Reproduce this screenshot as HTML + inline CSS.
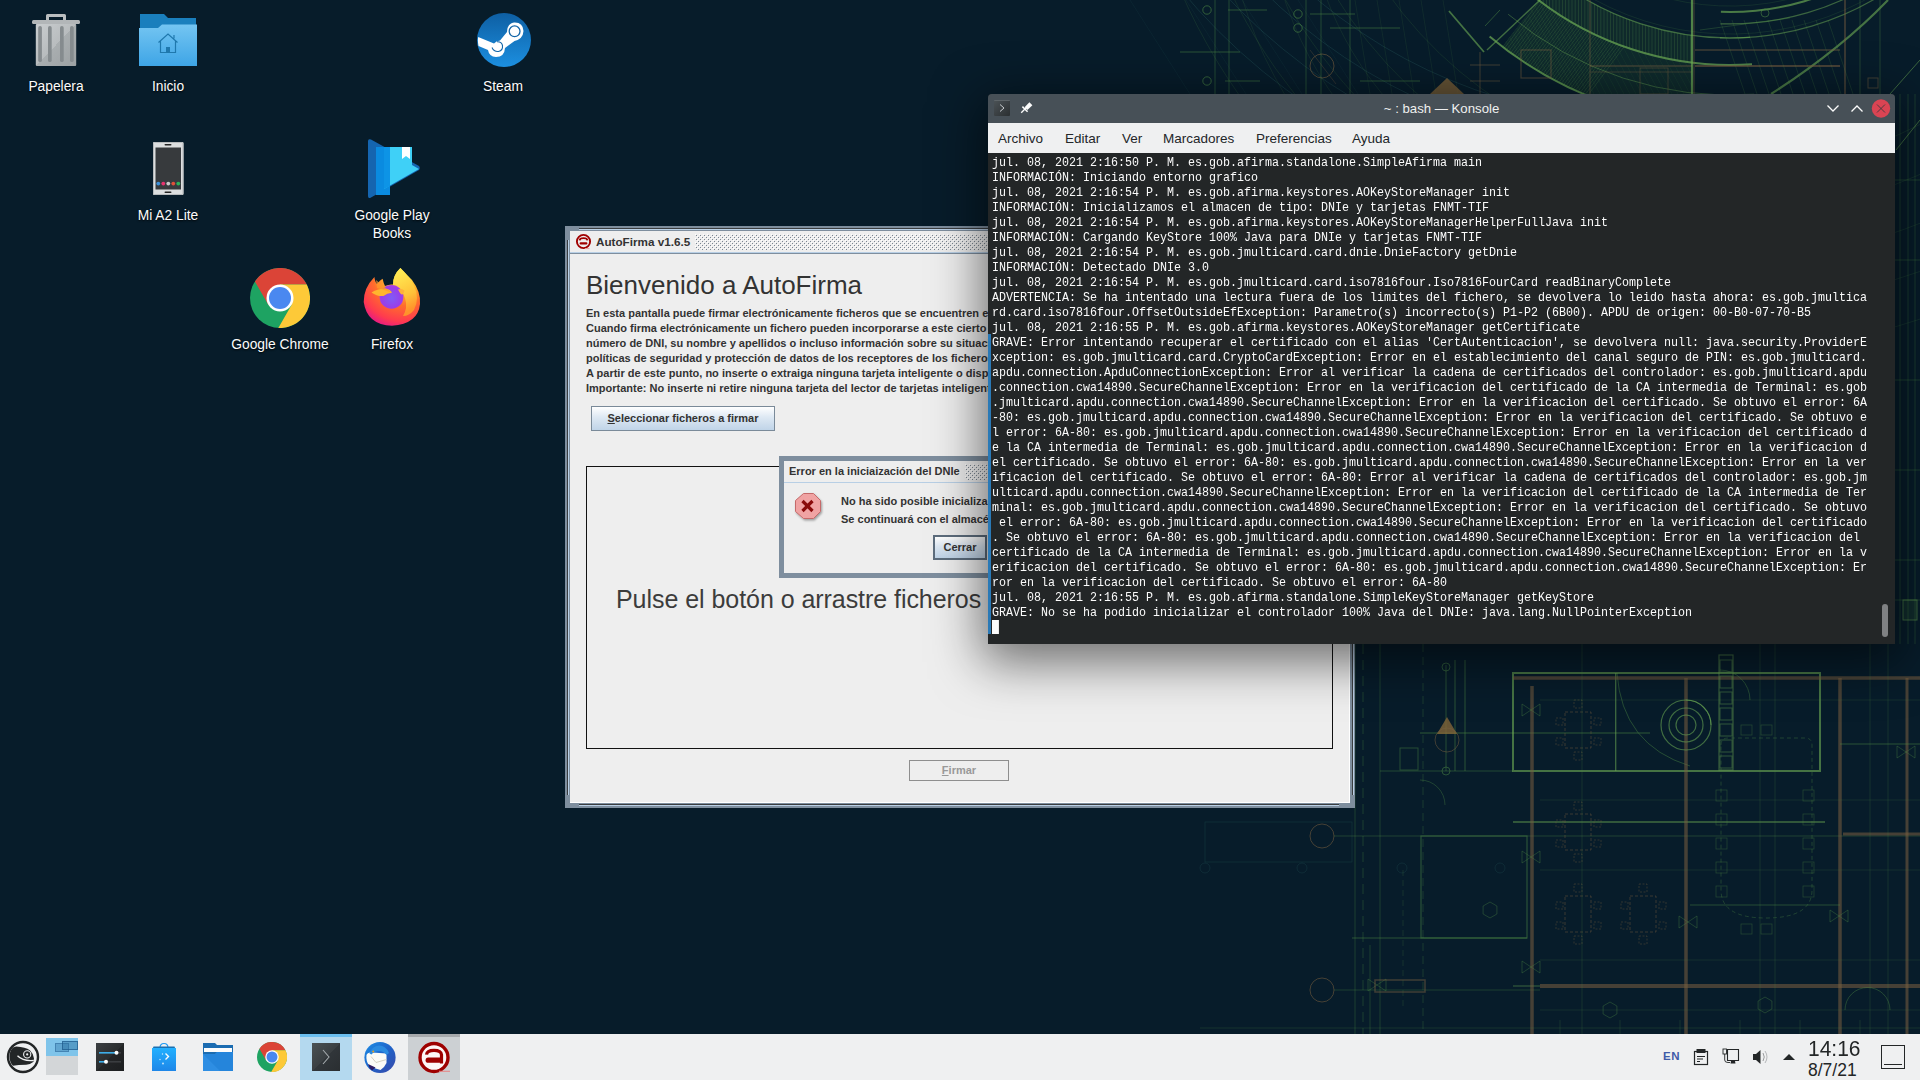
<!DOCTYPE html>
<html><head><meta charset="utf-8">
<style>
*{margin:0;padding:0;box-sizing:border-box}
html,body{width:1920px;height:1080px;overflow:hidden}
body{background:#071c2a;font-family:"Liberation Sans",sans-serif;position:relative}
.abs{position:absolute}
.lbl{position:absolute;color:#fcfcfc;font-size:13.8px;line-height:18px;text-align:center;text-shadow:0 1px 2px rgba(0,0,0,.9)}
#wall{position:absolute;left:0;top:0;width:1920px;height:1034px;filter:blur(0.3px)}
/* AutoFirma */
#af{position:absolute;left:565px;top:226px;width:790px;height:582px;background:#7e8e9e}
#af .tb{position:absolute;left:5px;top:5px;width:780px;height:22px;background:#eeeeee}
#af .cont{position:absolute;left:5px;top:28px;width:779px;height:548px;background:#eeeeee}
.bold{font-weight:bold}
/* Konsole */
#kon{position:absolute;left:988px;top:94px;width:907px;height:550px;background:#232627;border-radius:4px 4px 0 0;box-shadow:0 12px 50px 6px rgba(0,0,0,.55)}
#kon .title{position:absolute;left:0;top:0;width:907px;height:29px;background:#475057;border-radius:4px 4px 0 0}
#kon .menu{position:absolute;left:0;top:29px;width:907px;height:30px;background:#eff0f1}
#kon .term{position:absolute;left:4px;top:61px;transform-origin:0 0;transform:scaleX(0.86405);font-family:"Liberation Mono",monospace;font-size:13.5px;line-height:15px;color:#fcfcfc;white-space:pre}
#kon .cur{display:inline-block;width:8.1px;height:14px;background:#fcfcfc;vertical-align:top}
#kon .mi{position:absolute;top:1px;line-height:30px;font-size:13.5px;color:#232629}
#dlg{position:absolute;left:779px;top:456px;width:300px;height:122px;background:#7e8e9e}
.dots{background-image:radial-gradient(circle,#b5b5b5 0.6px,transparent 0.9px);background-size:4px 4px}
.para{font-size:11px;line-height:15px;color:#333;white-space:nowrap}
.btn{font-size:11px;font-weight:bold;color:#333;text-align:center;line-height:22px;border:1px solid #7a8a99;background:linear-gradient(#ffffff,#dde8f3 45%,#c0d4e8)}
.btnd{font-size:11px;font-weight:bold;color:#999;text-align:center;line-height:19px;border:1px solid #8e8e8e;background:#eeeeee}
/* taskbar */
#tbar{position:absolute;left:0;top:1034px;width:1920px;height:46px;background:#eff0f1}
</style></head>
<body>
<div id="wall"><svg width="1920" height="1034" viewBox="0 0 1920 1034"><path d="M1130,-400 A520,520 0 0 0 1650,120" stroke="#2f6a68" stroke-width="0.8" fill="none" opacity="0.35"/><path d="M1100,-400 A550,550 0 0 0 1650,150" stroke="#2f6a68" stroke-width="0.8" fill="none" opacity="0.35"/><path d="M1070,-400 A580,580 0 0 0 1650,180" stroke="#2f6a68" stroke-width="0.8" fill="none" opacity="0.35"/><path d="M1040,-400 A610,610 0 0 0 1650,210" stroke="#2f6a68" stroke-width="0.8" fill="none" opacity="0.35"/><line x1="1130.0" y1="0.0" x2="1190.0" y2="94.0" stroke="#2f6a68" stroke-width="0.6" opacity="0.18"/><line x1="1186.0" y1="0.0" x2="1246.0" y2="94.0" stroke="#2f6a68" stroke-width="0.6" opacity="0.18"/><line x1="1242.0" y1="0.0" x2="1302.0" y2="94.0" stroke="#2f6a68" stroke-width="0.6" opacity="0.18"/><line x1="1298.0" y1="0.0" x2="1358.0" y2="94.0" stroke="#2f6a68" stroke-width="0.6" opacity="0.18"/><circle cx="1207.0" cy="10.0" r="4.2" stroke="#4e8a45" stroke-width="1" fill="none" opacity="0.6"/><circle cx="1207.0" cy="81.0" r="4.2" stroke="#4e8a45" stroke-width="1" fill="none" opacity="0.6"/><circle cx="1298.0" cy="14.0" r="4.2" stroke="#4e8a45" stroke-width="1" fill="none" opacity="0.6"/><circle cx="1298.0" cy="28.0" r="4.2" stroke="#4e8a45" stroke-width="1" fill="none" opacity="0.6"/><line x1="1215.0" y1="0.0" x2="1215.0" y2="94.0" stroke="#4e8a45" stroke-width="0.9" opacity="0.45"/><line x1="1229.0" y1="0.0" x2="1229.0" y2="94.0" stroke="#4e8a45" stroke-width="0.9" opacity="0.45"/><line x1="1306.0" y1="0.0" x2="1306.0" y2="94.0" stroke="#4e8a45" stroke-width="0.9" opacity="0.45"/><line x1="1321.0" y1="0.0" x2="1321.0" y2="94.0" stroke="#4e8a45" stroke-width="0.9" opacity="0.45"/><line x1="1350.0" y1="0.0" x2="1350.0" y2="94.0" stroke="#4e8a45" stroke-width="0.9" opacity="0.45"/><line x1="1228.0" y1="10.0" x2="1267.0" y2="10.0" stroke="#4e8a45" stroke-width="1" opacity="0.5"/><line x1="1310.0" y1="14.0" x2="1355.0" y2="14.0" stroke="#4e8a45" stroke-width="1" opacity="0.5"/><line x1="1330.0" y1="28.0" x2="1400.0" y2="28.0" stroke="#4e8a45" stroke-width="1" opacity="0.5"/><line x1="1225.0" y1="81.0" x2="1260.0" y2="81.0" stroke="#4e8a45" stroke-width="1" opacity="0.5"/><line x1="1360.0" y1="81.0" x2="1420.0" y2="81.0" stroke="#4e8a45" stroke-width="1" opacity="0.5"/><line x1="1180.0" y1="52.0" x2="1240.0" y2="52.0" stroke="#4e8a45" stroke-width="1" opacity="0.5"/><circle cx="1322.0" cy="66.0" r="12.0" stroke="#7a6040" stroke-width="1" fill="none" opacity="0.6"/><line x1="1310.0" y1="50.0" x2="1336.0" y2="84.0" stroke="#7a6040" stroke-width="0.8" opacity="0.4"/><path d="M1305,-120 A335,335 0 0 0 1640,215" stroke="#4e8a45" stroke-width="0.7" fill="none" opacity="0.22"/><path d="M1265,-120 A375,375 0 0 0 1640,255" stroke="#4e8a45" stroke-width="0.7" fill="none" opacity="0.22"/><path d="M1225,-120 A415,415 0 0 0 1640,295" stroke="#4e8a45" stroke-width="0.7" fill="none" opacity="0.22"/><line x1="1355.0" y1="0.0" x2="1370.0" y2="94.0" stroke="#4e8a45" stroke-width="0.6" opacity="0.22"/><line x1="1377.0" y1="0.0" x2="1392.0" y2="94.0" stroke="#4e8a45" stroke-width="0.6" opacity="0.22"/><line x1="1399.0" y1="0.0" x2="1414.0" y2="94.0" stroke="#4e8a45" stroke-width="0.6" opacity="0.22"/><line x1="1421.0" y1="0.0" x2="1436.0" y2="94.0" stroke="#4e8a45" stroke-width="0.6" opacity="0.22"/><line x1="1443.0" y1="0.0" x2="1458.0" y2="94.0" stroke="#4e8a45" stroke-width="0.6" opacity="0.22"/><defs><clipPath id="rc"><rect x="1300" y="0" width="392" height="94"/></clipPath><clipPath id="bandA"><polygon points="1756.1,123.1 1749.3,123.5 1742.6,123.8 1735.8,124.0 1729.0,124.0 1722.2,123.9 1715.5,123.7 1708.7,123.4 1702.0,122.9 1695.2,122.4 1688.5,121.7 1681.7,120.9 1675.0,119.9 1668.4,118.9 1661.7,117.7 1655.0,116.4 1648.4,115.0 1641.8,113.5 1635.3,111.8 1628.7,110.0 1622.2,108.1 1615.7,106.1 1609.3,104.0 1602.9,101.8 1596.6,99.4 1590.3,96.9 1584.0,94.3 1577.8,91.6 1571.6,88.8 1565.5,85.9 1559.5,82.9 1553.5,79.7 1547.5,76.5 1541.7,73.1 1535.8,69.7 1530.1,66.1 1524.4,62.4 1518.8,58.6 1513.2,54.8 1507.7,50.8 1502.3,46.7 1538.2,-0.1 1542.8,3.3 1547.4,6.7 1552.1,9.9 1556.8,13.1 1561.6,16.2 1566.5,19.2 1571.4,22.1 1576.3,25.0 1581.3,27.7 1586.4,30.4 1591.5,32.9 1596.6,35.4 1601.8,37.7 1607.0,40.0 1612.3,42.2 1617.6,44.3 1623.0,46.3 1628.4,48.2 1633.8,49.9 1639.2,51.6 1644.7,53.2 1650.2,54.7 1655.7,56.1 1661.3,57.4 1666.9,58.6 1672.5,59.7 1678.1,60.7 1683.7,61.6 1689.4,62.4 1695.0,63.1 1700.7,63.6 1706.4,64.1 1712.1,64.5 1717.8,64.8 1723.5,64.9 1729.2,65.0 1734.9,65.0 1740.6,64.8 1746.3,64.6 1752.0,64.2"/></clipPath><clipPath id="bandB"><polygon points="1752.0,64.2 1744.6,64.7 1737.1,64.9 1729.7,65.0 1722.3,64.9 1714.9,64.6 1707.5,64.2 1700.1,63.6 1692.7,62.8 1685.3,61.8 1678.0,60.7 1670.7,59.4 1663.4,57.9 1656.2,56.2 1649.0,54.4 1641.9,52.4 1634.8,50.3 1627.7,47.9 1620.7,45.4 1613.8,42.8 1606.9,40.0 1600.1,37.0 1593.4,33.8 1586.7,30.5 1580.2,27.1 1573.7,23.5 1567.3,19.7 1561.0,15.8 1554.8,11.8 1548.6,7.6 1542.6,3.2 1536.7,-1.3 1530.9,-5.9 1525.2,-10.7 1519.6,-15.5 1514.2,-20.6 1508.8,-25.7 1503.6,-31.0 1498.5,-36.4 1493.5,-41.9 1488.7,-47.5 1509.4,-64.9 1513.8,-59.7 1518.3,-54.7 1523.0,-49.8 1527.8,-44.9 1532.7,-40.2 1537.7,-35.6 1542.8,-31.2 1548.0,-26.8 1553.3,-22.6 1558.7,-18.5 1564.2,-14.5 1569.8,-10.7 1575.5,-7.0 1581.2,-3.4 1587.1,0.0 1593.0,3.3 1599.0,6.5 1605.1,9.5 1611.3,12.4 1617.5,15.1 1623.7,17.7 1630.1,20.1 1636.5,22.4 1642.9,24.5 1649.4,26.5 1655.9,28.3 1662.5,30.0 1669.1,31.5 1675.8,32.9 1682.5,34.1 1689.2,35.1 1695.9,36.0 1702.6,36.7 1709.4,37.3 1716.2,37.7 1723.0,37.9 1729.7,38.0 1736.5,37.9 1743.3,37.7 1750.1,37.3"/></clipPath></defs><g clip-path="url(#rc)"><g clip-path="url(#bandA)"><rect x="1300" y="0" width="400" height="94" fill="rgba(70,140,60,0.13)"/><line x1="1304.0" y1="94.0" x2="1374.0" y2="0.0" stroke="#6fae55" stroke-width="0.6" opacity="0.3"/><line x1="1307.2" y1="94.0" x2="1377.2" y2="0.0" stroke="#6fae55" stroke-width="0.6" opacity="0.3"/><line x1="1310.4" y1="94.0" x2="1380.4" y2="0.0" stroke="#6fae55" stroke-width="0.6" opacity="0.3"/><line x1="1313.6" y1="94.0" x2="1383.6" y2="0.0" stroke="#6fae55" stroke-width="0.6" opacity="0.3"/><line x1="1316.8" y1="94.0" x2="1386.8" y2="0.0" stroke="#6fae55" stroke-width="0.6" opacity="0.3"/><line x1="1320.0" y1="94.0" x2="1390.0" y2="0.0" stroke="#6fae55" stroke-width="0.6" opacity="0.3"/><line x1="1323.2" y1="94.0" x2="1393.2" y2="0.0" stroke="#6fae55" stroke-width="0.6" opacity="0.3"/><line x1="1326.4" y1="94.0" x2="1396.4" y2="0.0" stroke="#6fae55" stroke-width="0.6" opacity="0.3"/><line x1="1329.6" y1="94.0" x2="1399.6" y2="0.0" stroke="#6fae55" stroke-width="0.6" opacity="0.3"/><line x1="1332.8" y1="94.0" x2="1402.8" y2="0.0" stroke="#6fae55" stroke-width="0.6" opacity="0.3"/><line x1="1336.0" y1="94.0" x2="1406.0" y2="0.0" stroke="#6fae55" stroke-width="0.6" opacity="0.3"/><line x1="1339.2" y1="94.0" x2="1409.2" y2="0.0" stroke="#6fae55" stroke-width="0.6" opacity="0.3"/><line x1="1342.4" y1="94.0" x2="1412.4" y2="0.0" stroke="#6fae55" stroke-width="0.6" opacity="0.3"/><line x1="1345.6" y1="94.0" x2="1415.6" y2="0.0" stroke="#6fae55" stroke-width="0.6" opacity="0.3"/><line x1="1348.8" y1="94.0" x2="1418.8" y2="0.0" stroke="#6fae55" stroke-width="0.6" opacity="0.3"/><line x1="1352.0" y1="94.0" x2="1422.0" y2="0.0" stroke="#6fae55" stroke-width="0.6" opacity="0.3"/><line x1="1355.2" y1="94.0" x2="1425.2" y2="0.0" stroke="#6fae55" stroke-width="0.6" opacity="0.3"/><line x1="1358.4" y1="94.0" x2="1428.4" y2="0.0" stroke="#6fae55" stroke-width="0.6" opacity="0.3"/><line x1="1361.6" y1="94.0" x2="1431.6" y2="0.0" stroke="#6fae55" stroke-width="0.6" opacity="0.3"/><line x1="1364.8" y1="94.0" x2="1434.8" y2="0.0" stroke="#6fae55" stroke-width="0.6" opacity="0.3"/><line x1="1368.0" y1="94.0" x2="1438.0" y2="0.0" stroke="#6fae55" stroke-width="0.6" opacity="0.3"/><line x1="1371.2" y1="94.0" x2="1441.2" y2="0.0" stroke="#6fae55" stroke-width="0.6" opacity="0.3"/><line x1="1374.4" y1="94.0" x2="1444.4" y2="0.0" stroke="#6fae55" stroke-width="0.6" opacity="0.3"/><line x1="1377.6" y1="94.0" x2="1447.6" y2="0.0" stroke="#6fae55" stroke-width="0.6" opacity="0.3"/><line x1="1380.8" y1="94.0" x2="1450.8" y2="0.0" stroke="#6fae55" stroke-width="0.6" opacity="0.3"/><line x1="1384.0" y1="94.0" x2="1454.0" y2="0.0" stroke="#6fae55" stroke-width="0.6" opacity="0.3"/><line x1="1387.2" y1="94.0" x2="1457.2" y2="0.0" stroke="#6fae55" stroke-width="0.6" opacity="0.3"/><line x1="1390.4" y1="94.0" x2="1460.4" y2="0.0" stroke="#6fae55" stroke-width="0.6" opacity="0.3"/><line x1="1393.6" y1="94.0" x2="1463.6" y2="0.0" stroke="#6fae55" stroke-width="0.6" opacity="0.3"/><line x1="1396.8" y1="94.0" x2="1466.8" y2="0.0" stroke="#6fae55" stroke-width="0.6" opacity="0.3"/><line x1="1400.0" y1="94.0" x2="1470.0" y2="0.0" stroke="#6fae55" stroke-width="0.6" opacity="0.3"/><line x1="1403.2" y1="94.0" x2="1473.2" y2="0.0" stroke="#6fae55" stroke-width="0.6" opacity="0.3"/><line x1="1406.4" y1="94.0" x2="1476.4" y2="0.0" stroke="#6fae55" stroke-width="0.6" opacity="0.3"/><line x1="1409.6" y1="94.0" x2="1479.6" y2="0.0" stroke="#6fae55" stroke-width="0.6" opacity="0.3"/><line x1="1412.8" y1="94.0" x2="1482.8" y2="0.0" stroke="#6fae55" stroke-width="0.6" opacity="0.3"/><line x1="1416.0" y1="94.0" x2="1486.0" y2="0.0" stroke="#6fae55" stroke-width="0.6" opacity="0.3"/><line x1="1419.2" y1="94.0" x2="1489.2" y2="0.0" stroke="#6fae55" stroke-width="0.6" opacity="0.3"/><line x1="1422.4" y1="94.0" x2="1492.4" y2="0.0" stroke="#6fae55" stroke-width="0.6" opacity="0.3"/><line x1="1425.6" y1="94.0" x2="1495.6" y2="0.0" stroke="#6fae55" stroke-width="0.6" opacity="0.3"/><line x1="1428.8" y1="94.0" x2="1498.8" y2="0.0" stroke="#6fae55" stroke-width="0.6" opacity="0.3"/><line x1="1432.0" y1="94.0" x2="1502.0" y2="0.0" stroke="#6fae55" stroke-width="0.6" opacity="0.3"/><line x1="1435.2" y1="94.0" x2="1505.2" y2="0.0" stroke="#6fae55" stroke-width="0.6" opacity="0.3"/><line x1="1438.4" y1="94.0" x2="1508.4" y2="0.0" stroke="#6fae55" stroke-width="0.6" opacity="0.3"/><line x1="1441.6" y1="94.0" x2="1511.6" y2="0.0" stroke="#6fae55" stroke-width="0.6" opacity="0.3"/><line x1="1444.8" y1="94.0" x2="1514.8" y2="0.0" stroke="#6fae55" stroke-width="0.6" opacity="0.3"/><line x1="1448.0" y1="94.0" x2="1518.0" y2="0.0" stroke="#6fae55" stroke-width="0.6" opacity="0.3"/><line x1="1451.2" y1="94.0" x2="1521.2" y2="0.0" stroke="#6fae55" stroke-width="0.6" opacity="0.3"/><line x1="1454.4" y1="94.0" x2="1524.4" y2="0.0" stroke="#6fae55" stroke-width="0.6" opacity="0.3"/><line x1="1457.6" y1="94.0" x2="1527.6" y2="0.0" stroke="#6fae55" stroke-width="0.6" opacity="0.3"/><line x1="1460.8" y1="94.0" x2="1530.8" y2="0.0" stroke="#6fae55" stroke-width="0.6" opacity="0.3"/><line x1="1464.0" y1="94.0" x2="1534.0" y2="0.0" stroke="#6fae55" stroke-width="0.6" opacity="0.3"/><line x1="1467.2" y1="94.0" x2="1537.2" y2="0.0" stroke="#6fae55" stroke-width="0.6" opacity="0.3"/><line x1="1470.4" y1="94.0" x2="1540.4" y2="0.0" stroke="#6fae55" stroke-width="0.6" opacity="0.3"/><line x1="1473.6" y1="94.0" x2="1543.6" y2="0.0" stroke="#6fae55" stroke-width="0.6" opacity="0.3"/><line x1="1476.8" y1="94.0" x2="1546.8" y2="0.0" stroke="#6fae55" stroke-width="0.6" opacity="0.3"/><line x1="1480.0" y1="94.0" x2="1550.0" y2="0.0" stroke="#6fae55" stroke-width="0.6" opacity="0.3"/><line x1="1483.2" y1="94.0" x2="1553.2" y2="0.0" stroke="#6fae55" stroke-width="0.6" opacity="0.3"/><line x1="1486.4" y1="94.0" x2="1556.4" y2="0.0" stroke="#6fae55" stroke-width="0.6" opacity="0.3"/><line x1="1489.6" y1="94.0" x2="1559.6" y2="0.0" stroke="#6fae55" stroke-width="0.6" opacity="0.3"/><line x1="1492.8" y1="94.0" x2="1562.8" y2="0.0" stroke="#6fae55" stroke-width="0.6" opacity="0.3"/><line x1="1496.0" y1="94.0" x2="1566.0" y2="0.0" stroke="#6fae55" stroke-width="0.6" opacity="0.3"/><line x1="1499.2" y1="94.0" x2="1569.2" y2="0.0" stroke="#6fae55" stroke-width="0.6" opacity="0.3"/><line x1="1502.4" y1="94.0" x2="1572.4" y2="0.0" stroke="#6fae55" stroke-width="0.6" opacity="0.3"/><line x1="1505.6" y1="94.0" x2="1575.6" y2="0.0" stroke="#6fae55" stroke-width="0.6" opacity="0.3"/><line x1="1508.8" y1="94.0" x2="1578.8" y2="0.0" stroke="#6fae55" stroke-width="0.6" opacity="0.3"/><line x1="1512.0" y1="94.0" x2="1582.0" y2="0.0" stroke="#6fae55" stroke-width="0.6" opacity="0.3"/><line x1="1515.2" y1="94.0" x2="1585.2" y2="0.0" stroke="#6fae55" stroke-width="0.6" opacity="0.3"/><line x1="1518.4" y1="94.0" x2="1588.4" y2="0.0" stroke="#6fae55" stroke-width="0.6" opacity="0.3"/><line x1="1521.6" y1="94.0" x2="1591.6" y2="0.0" stroke="#6fae55" stroke-width="0.6" opacity="0.3"/><line x1="1524.8" y1="94.0" x2="1594.8" y2="0.0" stroke="#6fae55" stroke-width="0.6" opacity="0.3"/><line x1="1528.0" y1="94.0" x2="1598.0" y2="0.0" stroke="#6fae55" stroke-width="0.6" opacity="0.3"/><line x1="1531.2" y1="94.0" x2="1601.2" y2="0.0" stroke="#6fae55" stroke-width="0.6" opacity="0.3"/><line x1="1534.4" y1="94.0" x2="1604.4" y2="0.0" stroke="#6fae55" stroke-width="0.6" opacity="0.3"/><line x1="1537.6" y1="94.0" x2="1607.6" y2="0.0" stroke="#6fae55" stroke-width="0.6" opacity="0.3"/><line x1="1540.8" y1="94.0" x2="1610.8" y2="0.0" stroke="#6fae55" stroke-width="0.6" opacity="0.3"/><line x1="1544.0" y1="94.0" x2="1614.0" y2="0.0" stroke="#6fae55" stroke-width="0.6" opacity="0.3"/><line x1="1547.2" y1="94.0" x2="1617.2" y2="0.0" stroke="#6fae55" stroke-width="0.6" opacity="0.3"/><line x1="1550.4" y1="94.0" x2="1620.4" y2="0.0" stroke="#6fae55" stroke-width="0.6" opacity="0.3"/><line x1="1553.6" y1="94.0" x2="1623.6" y2="0.0" stroke="#6fae55" stroke-width="0.6" opacity="0.3"/><line x1="1556.8" y1="94.0" x2="1626.8" y2="0.0" stroke="#6fae55" stroke-width="0.6" opacity="0.3"/><line x1="1560.0" y1="94.0" x2="1630.0" y2="0.0" stroke="#6fae55" stroke-width="0.6" opacity="0.3"/><line x1="1563.2" y1="94.0" x2="1633.2" y2="0.0" stroke="#6fae55" stroke-width="0.6" opacity="0.3"/><line x1="1566.4" y1="94.0" x2="1636.4" y2="0.0" stroke="#6fae55" stroke-width="0.6" opacity="0.3"/><line x1="1569.6" y1="94.0" x2="1639.6" y2="0.0" stroke="#6fae55" stroke-width="0.6" opacity="0.3"/><line x1="1572.8" y1="94.0" x2="1642.8" y2="0.0" stroke="#6fae55" stroke-width="0.6" opacity="0.3"/><line x1="1576.0" y1="94.0" x2="1646.0" y2="0.0" stroke="#6fae55" stroke-width="0.6" opacity="0.3"/><line x1="1579.2" y1="94.0" x2="1649.2" y2="0.0" stroke="#6fae55" stroke-width="0.6" opacity="0.3"/><line x1="1582.4" y1="94.0" x2="1652.4" y2="0.0" stroke="#6fae55" stroke-width="0.6" opacity="0.3"/><line x1="1585.6" y1="94.0" x2="1655.6" y2="0.0" stroke="#6fae55" stroke-width="0.6" opacity="0.3"/><line x1="1588.8" y1="94.0" x2="1658.8" y2="0.0" stroke="#6fae55" stroke-width="0.6" opacity="0.3"/><line x1="1220.0" y1="0.0" x2="1270.0" y2="94.0" stroke="#4e8a45" stroke-width="0.5" opacity="0.2"/><line x1="1226.0" y1="0.0" x2="1276.0" y2="94.0" stroke="#4e8a45" stroke-width="0.5" opacity="0.2"/><line x1="1232.0" y1="0.0" x2="1282.0" y2="94.0" stroke="#4e8a45" stroke-width="0.5" opacity="0.2"/><line x1="1238.0" y1="0.0" x2="1288.0" y2="94.0" stroke="#4e8a45" stroke-width="0.5" opacity="0.2"/><line x1="1244.0" y1="0.0" x2="1294.0" y2="94.0" stroke="#4e8a45" stroke-width="0.5" opacity="0.2"/><line x1="1250.0" y1="0.0" x2="1300.0" y2="94.0" stroke="#4e8a45" stroke-width="0.5" opacity="0.2"/><line x1="1256.0" y1="0.0" x2="1306.0" y2="94.0" stroke="#4e8a45" stroke-width="0.5" opacity="0.2"/><line x1="1262.0" y1="0.0" x2="1312.0" y2="94.0" stroke="#4e8a45" stroke-width="0.5" opacity="0.2"/><line x1="1268.0" y1="0.0" x2="1318.0" y2="94.0" stroke="#4e8a45" stroke-width="0.5" opacity="0.2"/><line x1="1274.0" y1="0.0" x2="1324.0" y2="94.0" stroke="#4e8a45" stroke-width="0.5" opacity="0.2"/><line x1="1280.0" y1="0.0" x2="1330.0" y2="94.0" stroke="#4e8a45" stroke-width="0.5" opacity="0.2"/><line x1="1286.0" y1="0.0" x2="1336.0" y2="94.0" stroke="#4e8a45" stroke-width="0.5" opacity="0.2"/><line x1="1292.0" y1="0.0" x2="1342.0" y2="94.0" stroke="#4e8a45" stroke-width="0.5" opacity="0.2"/><line x1="1298.0" y1="0.0" x2="1348.0" y2="94.0" stroke="#4e8a45" stroke-width="0.5" opacity="0.2"/><line x1="1304.0" y1="0.0" x2="1354.0" y2="94.0" stroke="#4e8a45" stroke-width="0.5" opacity="0.2"/><line x1="1310.0" y1="0.0" x2="1360.0" y2="94.0" stroke="#4e8a45" stroke-width="0.5" opacity="0.2"/><line x1="1316.0" y1="0.0" x2="1366.0" y2="94.0" stroke="#4e8a45" stroke-width="0.5" opacity="0.2"/><line x1="1322.0" y1="0.0" x2="1372.0" y2="94.0" stroke="#4e8a45" stroke-width="0.5" opacity="0.2"/><line x1="1328.0" y1="0.0" x2="1378.0" y2="94.0" stroke="#4e8a45" stroke-width="0.5" opacity="0.2"/><line x1="1334.0" y1="0.0" x2="1384.0" y2="94.0" stroke="#4e8a45" stroke-width="0.5" opacity="0.2"/><line x1="1340.0" y1="0.0" x2="1390.0" y2="94.0" stroke="#4e8a45" stroke-width="0.5" opacity="0.2"/><line x1="1346.0" y1="0.0" x2="1396.0" y2="94.0" stroke="#4e8a45" stroke-width="0.5" opacity="0.2"/><line x1="1352.0" y1="0.0" x2="1402.0" y2="94.0" stroke="#4e8a45" stroke-width="0.5" opacity="0.2"/><line x1="1358.0" y1="0.0" x2="1408.0" y2="94.0" stroke="#4e8a45" stroke-width="0.5" opacity="0.2"/><line x1="1364.0" y1="0.0" x2="1414.0" y2="94.0" stroke="#4e8a45" stroke-width="0.5" opacity="0.2"/><line x1="1370.0" y1="0.0" x2="1420.0" y2="94.0" stroke="#4e8a45" stroke-width="0.5" opacity="0.2"/><line x1="1376.0" y1="0.0" x2="1426.0" y2="94.0" stroke="#4e8a45" stroke-width="0.5" opacity="0.2"/><line x1="1382.0" y1="0.0" x2="1432.0" y2="94.0" stroke="#4e8a45" stroke-width="0.5" opacity="0.2"/><line x1="1388.0" y1="0.0" x2="1438.0" y2="94.0" stroke="#4e8a45" stroke-width="0.5" opacity="0.2"/><line x1="1394.0" y1="0.0" x2="1444.0" y2="94.0" stroke="#4e8a45" stroke-width="0.5" opacity="0.2"/><line x1="1400.0" y1="0.0" x2="1450.0" y2="94.0" stroke="#4e8a45" stroke-width="0.5" opacity="0.2"/><line x1="1406.0" y1="0.0" x2="1456.0" y2="94.0" stroke="#4e8a45" stroke-width="0.5" opacity="0.2"/><line x1="1412.0" y1="0.0" x2="1462.0" y2="94.0" stroke="#4e8a45" stroke-width="0.5" opacity="0.2"/><line x1="1418.0" y1="0.0" x2="1468.0" y2="94.0" stroke="#4e8a45" stroke-width="0.5" opacity="0.2"/><line x1="1424.0" y1="0.0" x2="1474.0" y2="94.0" stroke="#4e8a45" stroke-width="0.5" opacity="0.2"/><line x1="1430.0" y1="0.0" x2="1480.0" y2="94.0" stroke="#4e8a45" stroke-width="0.5" opacity="0.2"/><line x1="1436.0" y1="0.0" x2="1486.0" y2="94.0" stroke="#4e8a45" stroke-width="0.5" opacity="0.2"/><line x1="1442.0" y1="0.0" x2="1492.0" y2="94.0" stroke="#4e8a45" stroke-width="0.5" opacity="0.2"/><line x1="1448.0" y1="0.0" x2="1498.0" y2="94.0" stroke="#4e8a45" stroke-width="0.5" opacity="0.2"/><line x1="1454.0" y1="0.0" x2="1504.0" y2="94.0" stroke="#4e8a45" stroke-width="0.5" opacity="0.2"/><line x1="1460.0" y1="0.0" x2="1510.0" y2="94.0" stroke="#4e8a45" stroke-width="0.5" opacity="0.2"/><line x1="1466.0" y1="0.0" x2="1516.0" y2="94.0" stroke="#4e8a45" stroke-width="0.5" opacity="0.2"/><line x1="1472.0" y1="0.0" x2="1522.0" y2="94.0" stroke="#4e8a45" stroke-width="0.5" opacity="0.2"/><line x1="1478.0" y1="0.0" x2="1528.0" y2="94.0" stroke="#4e8a45" stroke-width="0.5" opacity="0.2"/><line x1="1484.0" y1="0.0" x2="1534.0" y2="94.0" stroke="#4e8a45" stroke-width="0.5" opacity="0.2"/><line x1="1490.0" y1="0.0" x2="1540.0" y2="94.0" stroke="#4e8a45" stroke-width="0.5" opacity="0.2"/><line x1="1496.0" y1="0.0" x2="1546.0" y2="94.0" stroke="#4e8a45" stroke-width="0.5" opacity="0.2"/><line x1="1502.0" y1="0.0" x2="1552.0" y2="94.0" stroke="#4e8a45" stroke-width="0.5" opacity="0.2"/><line x1="1508.0" y1="0.0" x2="1558.0" y2="94.0" stroke="#4e8a45" stroke-width="0.5" opacity="0.2"/><line x1="1514.0" y1="0.0" x2="1564.0" y2="94.0" stroke="#4e8a45" stroke-width="0.5" opacity="0.2"/><line x1="1520.0" y1="0.0" x2="1570.0" y2="94.0" stroke="#4e8a45" stroke-width="0.5" opacity="0.2"/><line x1="1526.0" y1="0.0" x2="1576.0" y2="94.0" stroke="#4e8a45" stroke-width="0.5" opacity="0.2"/><line x1="1532.0" y1="0.0" x2="1582.0" y2="94.0" stroke="#4e8a45" stroke-width="0.5" opacity="0.2"/><line x1="1538.0" y1="0.0" x2="1588.0" y2="94.0" stroke="#4e8a45" stroke-width="0.5" opacity="0.2"/><line x1="1544.0" y1="0.0" x2="1594.0" y2="94.0" stroke="#4e8a45" stroke-width="0.5" opacity="0.2"/><line x1="1550.0" y1="0.0" x2="1600.0" y2="94.0" stroke="#4e8a45" stroke-width="0.5" opacity="0.2"/><line x1="1556.0" y1="0.0" x2="1606.0" y2="94.0" stroke="#4e8a45" stroke-width="0.5" opacity="0.2"/><line x1="1562.0" y1="0.0" x2="1612.0" y2="94.0" stroke="#4e8a45" stroke-width="0.5" opacity="0.2"/><line x1="1568.0" y1="0.0" x2="1618.0" y2="94.0" stroke="#4e8a45" stroke-width="0.5" opacity="0.2"/><line x1="1574.0" y1="0.0" x2="1624.0" y2="94.0" stroke="#4e8a45" stroke-width="0.5" opacity="0.2"/><line x1="1580.0" y1="0.0" x2="1630.0" y2="94.0" stroke="#4e8a45" stroke-width="0.5" opacity="0.2"/><line x1="1586.0" y1="0.0" x2="1636.0" y2="94.0" stroke="#4e8a45" stroke-width="0.5" opacity="0.2"/><line x1="1592.0" y1="0.0" x2="1642.0" y2="94.0" stroke="#4e8a45" stroke-width="0.5" opacity="0.2"/><line x1="1598.0" y1="0.0" x2="1648.0" y2="94.0" stroke="#4e8a45" stroke-width="0.5" opacity="0.2"/><line x1="1604.0" y1="0.0" x2="1654.0" y2="94.0" stroke="#4e8a45" stroke-width="0.5" opacity="0.2"/><line x1="1610.0" y1="0.0" x2="1660.0" y2="94.0" stroke="#4e8a45" stroke-width="0.5" opacity="0.2"/><line x1="1616.0" y1="0.0" x2="1666.0" y2="94.0" stroke="#4e8a45" stroke-width="0.5" opacity="0.2"/><line x1="1622.0" y1="0.0" x2="1672.0" y2="94.0" stroke="#4e8a45" stroke-width="0.5" opacity="0.2"/><line x1="1628.0" y1="0.0" x2="1678.0" y2="94.0" stroke="#4e8a45" stroke-width="0.5" opacity="0.2"/><line x1="1634.0" y1="0.0" x2="1684.0" y2="94.0" stroke="#4e8a45" stroke-width="0.5" opacity="0.2"/><line x1="1640.0" y1="0.0" x2="1690.0" y2="94.0" stroke="#4e8a45" stroke-width="0.5" opacity="0.2"/><line x1="1646.0" y1="0.0" x2="1696.0" y2="94.0" stroke="#4e8a45" stroke-width="0.5" opacity="0.2"/><line x1="1652.0" y1="0.0" x2="1702.0" y2="94.0" stroke="#4e8a45" stroke-width="0.5" opacity="0.2"/><line x1="1658.0" y1="0.0" x2="1708.0" y2="94.0" stroke="#4e8a45" stroke-width="0.5" opacity="0.2"/><line x1="1664.0" y1="0.0" x2="1714.0" y2="94.0" stroke="#4e8a45" stroke-width="0.5" opacity="0.2"/><line x1="1670.0" y1="0.0" x2="1720.0" y2="94.0" stroke="#4e8a45" stroke-width="0.5" opacity="0.2"/><line x1="1676.0" y1="0.0" x2="1726.0" y2="94.0" stroke="#4e8a45" stroke-width="0.5" opacity="0.2"/><line x1="1682.0" y1="0.0" x2="1732.0" y2="94.0" stroke="#4e8a45" stroke-width="0.5" opacity="0.2"/><line x1="1688.0" y1="0.0" x2="1738.0" y2="94.0" stroke="#4e8a45" stroke-width="0.5" opacity="0.2"/><line x1="1694.0" y1="0.0" x2="1744.0" y2="94.0" stroke="#4e8a45" stroke-width="0.5" opacity="0.2"/><line x1="1700.0" y1="0.0" x2="1750.0" y2="94.0" stroke="#4e8a45" stroke-width="0.5" opacity="0.2"/><line x1="1706.0" y1="0.0" x2="1756.0" y2="94.0" stroke="#4e8a45" stroke-width="0.5" opacity="0.2"/><line x1="1712.0" y1="0.0" x2="1762.0" y2="94.0" stroke="#4e8a45" stroke-width="0.5" opacity="0.2"/><line x1="1718.0" y1="0.0" x2="1768.0" y2="94.0" stroke="#4e8a45" stroke-width="0.5" opacity="0.2"/><line x1="1724.0" y1="0.0" x2="1774.0" y2="94.0" stroke="#4e8a45" stroke-width="0.5" opacity="0.2"/><line x1="1730.0" y1="0.0" x2="1780.0" y2="94.0" stroke="#4e8a45" stroke-width="0.5" opacity="0.2"/><line x1="1736.0" y1="0.0" x2="1786.0" y2="94.0" stroke="#4e8a45" stroke-width="0.5" opacity="0.2"/><line x1="1742.0" y1="0.0" x2="1792.0" y2="94.0" stroke="#4e8a45" stroke-width="0.5" opacity="0.2"/><line x1="1748.0" y1="0.0" x2="1798.0" y2="94.0" stroke="#4e8a45" stroke-width="0.5" opacity="0.2"/><line x1="1754.0" y1="0.0" x2="1804.0" y2="94.0" stroke="#4e8a45" stroke-width="0.5" opacity="0.2"/></g><g clip-path="url(#bandB)"><rect x="1300" y="0" width="400" height="94" fill="rgba(70,140,60,0.12)"/><line x1="1540.0" y1="0.0" x2="1540.0" y2="94.0" stroke="#6fae55" stroke-width="0.6" opacity="0.32"/><line x1="1543.2" y1="0.0" x2="1543.2" y2="94.0" stroke="#6fae55" stroke-width="0.6" opacity="0.32"/><line x1="1546.4" y1="0.0" x2="1546.4" y2="94.0" stroke="#6fae55" stroke-width="0.6" opacity="0.32"/><line x1="1549.6" y1="0.0" x2="1549.6" y2="94.0" stroke="#6fae55" stroke-width="0.6" opacity="0.32"/><line x1="1552.8" y1="0.0" x2="1552.8" y2="94.0" stroke="#6fae55" stroke-width="0.6" opacity="0.32"/><line x1="1556.0" y1="0.0" x2="1556.0" y2="94.0" stroke="#6fae55" stroke-width="0.6" opacity="0.32"/><line x1="1559.2" y1="0.0" x2="1559.2" y2="94.0" stroke="#6fae55" stroke-width="0.6" opacity="0.32"/><line x1="1562.4" y1="0.0" x2="1562.4" y2="94.0" stroke="#6fae55" stroke-width="0.6" opacity="0.32"/><line x1="1565.6" y1="0.0" x2="1565.6" y2="94.0" stroke="#6fae55" stroke-width="0.6" opacity="0.32"/><line x1="1568.8" y1="0.0" x2="1568.8" y2="94.0" stroke="#6fae55" stroke-width="0.6" opacity="0.32"/><line x1="1572.0" y1="0.0" x2="1572.0" y2="94.0" stroke="#6fae55" stroke-width="0.6" opacity="0.32"/><line x1="1575.2" y1="0.0" x2="1575.2" y2="94.0" stroke="#6fae55" stroke-width="0.6" opacity="0.32"/><line x1="1578.4" y1="0.0" x2="1578.4" y2="94.0" stroke="#6fae55" stroke-width="0.6" opacity="0.32"/><line x1="1581.6" y1="0.0" x2="1581.6" y2="94.0" stroke="#6fae55" stroke-width="0.6" opacity="0.32"/><line x1="1584.8" y1="0.0" x2="1584.8" y2="94.0" stroke="#6fae55" stroke-width="0.6" opacity="0.32"/><line x1="1588.0" y1="0.0" x2="1588.0" y2="94.0" stroke="#6fae55" stroke-width="0.6" opacity="0.32"/><line x1="1591.2" y1="0.0" x2="1591.2" y2="94.0" stroke="#6fae55" stroke-width="0.6" opacity="0.32"/><line x1="1594.4" y1="0.0" x2="1594.4" y2="94.0" stroke="#6fae55" stroke-width="0.6" opacity="0.32"/><line x1="1597.6" y1="0.0" x2="1597.6" y2="94.0" stroke="#6fae55" stroke-width="0.6" opacity="0.32"/><line x1="1600.8" y1="0.0" x2="1600.8" y2="94.0" stroke="#6fae55" stroke-width="0.6" opacity="0.32"/><line x1="1604.0" y1="0.0" x2="1604.0" y2="94.0" stroke="#6fae55" stroke-width="0.6" opacity="0.32"/><line x1="1607.2" y1="0.0" x2="1607.2" y2="94.0" stroke="#6fae55" stroke-width="0.6" opacity="0.32"/><line x1="1610.4" y1="0.0" x2="1610.4" y2="94.0" stroke="#6fae55" stroke-width="0.6" opacity="0.32"/><line x1="1613.6" y1="0.0" x2="1613.6" y2="94.0" stroke="#6fae55" stroke-width="0.6" opacity="0.32"/><line x1="1616.8" y1="0.0" x2="1616.8" y2="94.0" stroke="#6fae55" stroke-width="0.6" opacity="0.32"/><line x1="1620.0" y1="0.0" x2="1620.0" y2="94.0" stroke="#6fae55" stroke-width="0.6" opacity="0.32"/><line x1="1623.2" y1="0.0" x2="1623.2" y2="94.0" stroke="#6fae55" stroke-width="0.6" opacity="0.32"/><line x1="1626.4" y1="0.0" x2="1626.4" y2="94.0" stroke="#6fae55" stroke-width="0.6" opacity="0.32"/><line x1="1629.6" y1="0.0" x2="1629.6" y2="94.0" stroke="#6fae55" stroke-width="0.6" opacity="0.32"/><line x1="1632.8" y1="0.0" x2="1632.8" y2="94.0" stroke="#6fae55" stroke-width="0.6" opacity="0.32"/><line x1="1636.0" y1="0.0" x2="1636.0" y2="94.0" stroke="#6fae55" stroke-width="0.6" opacity="0.32"/><line x1="1639.2" y1="0.0" x2="1639.2" y2="94.0" stroke="#6fae55" stroke-width="0.6" opacity="0.32"/><line x1="1642.4" y1="0.0" x2="1642.4" y2="94.0" stroke="#6fae55" stroke-width="0.6" opacity="0.32"/><line x1="1645.6" y1="0.0" x2="1645.6" y2="94.0" stroke="#6fae55" stroke-width="0.6" opacity="0.32"/><line x1="1648.8" y1="0.0" x2="1648.8" y2="94.0" stroke="#6fae55" stroke-width="0.6" opacity="0.32"/><line x1="1652.0" y1="0.0" x2="1652.0" y2="94.0" stroke="#6fae55" stroke-width="0.6" opacity="0.32"/><line x1="1655.2" y1="0.0" x2="1655.2" y2="94.0" stroke="#6fae55" stroke-width="0.6" opacity="0.32"/><line x1="1658.4" y1="0.0" x2="1658.4" y2="94.0" stroke="#6fae55" stroke-width="0.6" opacity="0.32"/><line x1="1661.6" y1="0.0" x2="1661.6" y2="94.0" stroke="#6fae55" stroke-width="0.6" opacity="0.32"/><line x1="1664.8" y1="0.0" x2="1664.8" y2="94.0" stroke="#6fae55" stroke-width="0.6" opacity="0.32"/><line x1="1668.0" y1="0.0" x2="1668.0" y2="94.0" stroke="#6fae55" stroke-width="0.6" opacity="0.32"/><line x1="1671.2" y1="0.0" x2="1671.2" y2="94.0" stroke="#6fae55" stroke-width="0.6" opacity="0.32"/><line x1="1674.4" y1="0.0" x2="1674.4" y2="94.0" stroke="#6fae55" stroke-width="0.6" opacity="0.32"/><line x1="1677.6" y1="0.0" x2="1677.6" y2="94.0" stroke="#6fae55" stroke-width="0.6" opacity="0.32"/><line x1="1680.8" y1="0.0" x2="1680.8" y2="94.0" stroke="#6fae55" stroke-width="0.6" opacity="0.32"/><line x1="1684.0" y1="0.0" x2="1684.0" y2="94.0" stroke="#6fae55" stroke-width="0.6" opacity="0.32"/><line x1="1687.2" y1="0.0" x2="1687.2" y2="94.0" stroke="#6fae55" stroke-width="0.6" opacity="0.32"/><line x1="1690.4" y1="0.0" x2="1690.4" y2="94.0" stroke="#6fae55" stroke-width="0.6" opacity="0.32"/><line x1="1693.6" y1="0.0" x2="1693.6" y2="94.0" stroke="#6fae55" stroke-width="0.6" opacity="0.32"/><line x1="1696.8" y1="0.0" x2="1696.8" y2="94.0" stroke="#6fae55" stroke-width="0.6" opacity="0.32"/></g></g><path d="M1544.9,-29.4 A288,288 0 0 0 1750.1,37.3" stroke="#6fae55" stroke-width="1.2" fill="none" opacity="0.55"/><path d="M1527.5,-8.7 A315,315 0 0 0 1752.0,64.2" stroke="#6fae55" stroke-width="2.0" fill="none" opacity="0.7"/><path d="M1489.6,36.5 A374,374 0 0 0 1756.1,123.1" stroke="#6fae55" stroke-width="2.0" fill="none" opacity="0.7"/><path d="M1508.2,14.3 A345,345 0 0 0 1754.1,94.2" stroke="#6fae55" stroke-width="0.9" fill="none" opacity="0.45"/><path d="M1542.1,-181.6 A200,200 0 0 0 1883.2,-121.4" stroke="#4e8a45" stroke-width="0.7" fill="none" opacity="0.25"/><path d="M1515.8,-172.0 A228,228 0 0 0 1904.7,-103.4" stroke="#4e8a45" stroke-width="0.7" fill="none" opacity="0.25"/><path d="M1489.4,-162.4 A256,256 0 0 0 1926.1,-85.4" stroke="#4e8a45" stroke-width="0.7" fill="none" opacity="0.25"/><path d="M1463.1,-152.9 A284,284 0 0 0 1947.6,-67.4" stroke="#4e8a45" stroke-width="0.7" fill="none" opacity="0.25"/><path d="M1335.3,-106.4 A420,420 0 0 0 2051.7,20.0" stroke="#4e8a45" stroke-width="0.7" fill="none" opacity="0.25"/><path d="M1293.0,-91.0 A465,465 0 0 0 2086.2,48.9" stroke="#4e8a45" stroke-width="0.7" fill="none" opacity="0.25"/><path d="M1250.8,-75.6 A510,510 0 0 0 2120.7,77.8" stroke="#4e8a45" stroke-width="0.7" fill="none" opacity="0.25"/><path d="M1208.5,-60.2 A555,555 0 0 0 2155.2,106.7" stroke="#4e8a45" stroke-width="0.7" fill="none" opacity="0.25"/><path d="M1166.2,-44.8 A600,600 0 0 0 2189.6,135.7" stroke="#4e8a45" stroke-width="0.7" fill="none" opacity="0.25"/><line x1="1449.0" y1="11.0" x2="1484.0" y2="52.0" stroke="#6fae55" stroke-width="1.8" opacity="0.6"/><line x1="1540.0" y1="0.0" x2="1487.0" y2="50.0" stroke="#6fae55" stroke-width="1.4" opacity="0.55"/><line x1="1485.0" y1="26.0" x2="1500.0" y2="10.0" stroke="#4e8a45" stroke-width="1" opacity="0.5"/><rect x="1521.0" y="50.0" width="30.0" height="28.0" stroke="#7a6040" stroke-width="1.2" fill="none" opacity="0.5"/><rect x="1640.0" y="68.0" width="28.0" height="26.0" stroke="#7a6040" stroke-width="1" fill="none" opacity="0.45"/><line x1="1480.0" y1="52.0" x2="1480.0" y2="94.0" stroke="#7a6040" stroke-width="1" opacity="0.5"/><line x1="1470.0" y1="65.0" x2="1500.0" y2="65.0" stroke="#7a6040" stroke-width="1" opacity="0.5"/><line x1="1470.0" y1="81.0" x2="1500.0" y2="81.0" stroke="#7a6040" stroke-width="1" opacity="0.5"/><line x1="1590.0" y1="66.0" x2="1692.0" y2="66.0" stroke="#7a6040" stroke-width="1.4" opacity="0.45"/><line x1="1590.0" y1="72.0" x2="1692.0" y2="72.0" stroke="#7a6040" stroke-width="1.0" opacity="0.4"/><line x1="1590.0" y1="0.0" x2="1590.0" y2="94.0" stroke="#7a6040" stroke-width="1.2" opacity="0.45"/><path d="M1430,94 L1447,78 L1464,94 Z" stroke="none" stroke-width="0" fill="#8a6a3a" opacity="0.7"/><line x1="1692.0" y1="0.0" x2="1692.0" y2="94.0" stroke="#6fae55" stroke-width="2.2" opacity="0.7"/><line x1="1694.0" y1="0.0" x2="1694.0" y2="94.0" stroke="#7a6040" stroke-width="1" opacity="0.55"/><path d="M1720.9,11.8 A262,262 0 0 0 1880.3,-35.4" stroke="#6fae55" stroke-width="2" fill="none" opacity="0.65"/><path d="M1720.4,23.8 A274,274 0 0 0 1887.2,-25.6" stroke="#6fae55" stroke-width="1.2" fill="none" opacity="0.5"/><path d="M1719.9,37.8 A288,288 0 0 0 1895.2,-14.1" stroke="#6fae55" stroke-width="1.2" fill="none" opacity="0.5"/><path d="M1771,94 Q1840,50 1888,0" stroke="#6fae55" stroke-width="2.2" fill="none" opacity="0.6"/><line x1="1695.0" y1="50.0" x2="1840.0" y2="50.0" stroke="#7a6040" stroke-width="1.5" opacity="0.5"/><line x1="1695.0" y1="66.0" x2="1840.0" y2="66.0" stroke="#7a6040" stroke-width="2" opacity="0.55"/><line x1="1845.0" y1="0.0" x2="1845.0" y2="94.0" stroke="#7a6040" stroke-width="1.6" opacity="0.55"/><line x1="1860.0" y1="0.0" x2="1860.0" y2="94.0" stroke="#4e8a45" stroke-width="0.8" opacity="0.45"/><line x1="1880.0" y1="0.0" x2="1880.0" y2="94.0" stroke="#4e8a45" stroke-width="0.8" opacity="0.45"/><line x1="1720.0" y1="20.0" x2="1745.0" y2="94.0" stroke="#4e8a45" stroke-width="0.7" opacity="0.3"/><line x1="1732.0" y1="20.0" x2="1757.0" y2="94.0" stroke="#4e8a45" stroke-width="0.7" opacity="0.3"/><line x1="1744.0" y1="20.0" x2="1769.0" y2="94.0" stroke="#4e8a45" stroke-width="0.7" opacity="0.3"/><line x1="1756.0" y1="20.0" x2="1781.0" y2="94.0" stroke="#4e8a45" stroke-width="0.7" opacity="0.3"/><line x1="1768.0" y1="20.0" x2="1793.0" y2="94.0" stroke="#4e8a45" stroke-width="0.7" opacity="0.3"/><line x1="1780.0" y1="20.0" x2="1805.0" y2="94.0" stroke="#4e8a45" stroke-width="0.7" opacity="0.3"/><line x1="1792.0" y1="20.0" x2="1817.0" y2="94.0" stroke="#4e8a45" stroke-width="0.7" opacity="0.3"/><line x1="1804.0" y1="20.0" x2="1829.0" y2="94.0" stroke="#4e8a45" stroke-width="0.7" opacity="0.3"/><line x1="1816.0" y1="20.0" x2="1841.0" y2="94.0" stroke="#4e8a45" stroke-width="0.7" opacity="0.3"/><line x1="1828.0" y1="20.0" x2="1853.0" y2="94.0" stroke="#4e8a45" stroke-width="0.7" opacity="0.3"/><circle cx="1765.0" cy="13.0" r="4.0" stroke="#4e8a45" stroke-width="1" fill="none" opacity="0.55"/><rect x="1868.0" y="78.0" width="10.0" height="10.0" stroke="#7a6040" stroke-width="1" fill="none" opacity="0.5"/><line x1="1890.0" y1="94.0" x2="1920.0" y2="60.0" stroke="#6fae55" stroke-width="1" opacity="0.5"/><line x1="1700.0" y1="30.0" x2="1790.0" y2="18.0" stroke="#4e8a45" stroke-width="0.8" opacity="0.4"/><line x1="1900.0" y1="94.0" x2="1900.0" y2="644.0" stroke="#4e8a45" stroke-width="0.8" opacity="0.35"/><line x1="1908.0" y1="94.0" x2="1908.0" y2="644.0" stroke="#4e8a45" stroke-width="0.8" opacity="0.35"/><line x1="1915.0" y1="94.0" x2="1915.0" y2="644.0" stroke="#4e8a45" stroke-width="0.8" opacity="0.35"/><line x1="1895.0" y1="180.0" x2="1920.0" y2="180.0" stroke="#4e8a45" stroke-width="0.8" opacity="0.4"/><line x1="1895.0" y1="260.0" x2="1920.0" y2="260.0" stroke="#4e8a45" stroke-width="0.8" opacity="0.4"/><line x1="1895.0" y1="380.0" x2="1920.0" y2="380.0" stroke="#4e8a45" stroke-width="0.8" opacity="0.4"/><line x1="1895.0" y1="470.0" x2="1920.0" y2="470.0" stroke="#4e8a45" stroke-width="0.8" opacity="0.4"/><line x1="1895.0" y1="560.0" x2="1920.0" y2="560.0" stroke="#4e8a45" stroke-width="0.8" opacity="0.4"/><line x1="1895.0" y1="600.0" x2="1920.0" y2="600.0" stroke="#4e8a45" stroke-width="0.8" opacity="0.4"/><rect x="1903.0" y="600.0" width="14.0" height="20.0" stroke="#6fae55" stroke-width="1" fill="rgba(90,160,70,0.25)" opacity="0.5"/><line x1="1896.0" y1="150.0" x2="1920.0" y2="120.0" stroke="#6fae55" stroke-width="1" opacity="0.5"/><rect x="1205.0" y="822.0" width="147.0" height="40.0" stroke="#2f6a68" stroke-width="0.7" fill="none" opacity="0.3"/><circle cx="1205.0" cy="868.0" r="5.0" stroke="#2f6a68" stroke-width="0.7" fill="none" opacity="0.3"/><circle cx="1302.0" cy="868.0" r="5.0" stroke="#2f6a68" stroke-width="0.7" fill="none" opacity="0.3"/><circle cx="1402.0" cy="868.0" r="5.0" stroke="#2f6a68" stroke-width="0.7" fill="none" opacity="0.3"/><circle cx="1500.0" cy="868.0" r="5.0" stroke="#2f6a68" stroke-width="0.7" fill="none" opacity="0.3"/><circle cx="1322.0" cy="836.0" r="12.0" stroke="#7a6040" stroke-width="1" fill="none" opacity="0.55"/><circle cx="1322.0" cy="990.0" r="12.0" stroke="#7a6040" stroke-width="1" fill="none" opacity="0.55"/><line x1="1334.0" y1="836.0" x2="1920.0" y2="836.0" stroke="#4e8a45" stroke-width="0.8" opacity="0.45"/><line x1="1334.0" y1="990.0" x2="1540.0" y2="990.0" stroke="#4e8a45" stroke-width="0.8" opacity="0.4"/><line x1="1355.0" y1="644.0" x2="1355.0" y2="1034.0" stroke="#4e8a45" stroke-width="0.8" opacity="0.4"/><line x1="1363.0" y1="644.0" x2="1363.0" y2="1034.0" stroke="#4e8a45" stroke-width="0.8" opacity="0.4" stroke-dasharray="10 6"/><line x1="1380.0" y1="644.0" x2="1380.0" y2="1034.0" stroke="#4e8a45" stroke-width="0.8" opacity="0.4"/><line x1="1423.0" y1="644.0" x2="1423.0" y2="1034.0" stroke="#4e8a45" stroke-width="0.8" opacity="0.35" stroke-dasharray="8 5"/><rect x="1421.0" y="836.0" width="106.0" height="102.0" stroke="#4e8a45" stroke-width="1.2" fill="none" opacity="0.5"/><line x1="1446.0" y1="665.0" x2="1446.0" y2="771.0" stroke="#4e8a45" stroke-width="1" opacity="0.45"/><circle cx="1446.0" cy="667.0" r="4.0" stroke="#4e8a45" stroke-width="1" fill="none" opacity="0.5"/><circle cx="1446.0" cy="771.0" r="4.0" stroke="#4e8a45" stroke-width="1" fill="none" opacity="0.5"/><path d="M1617,673 Q1622,745 1690,766" stroke="#4e8a45" stroke-width="1" fill="none" opacity="0.45"/><line x1="1352.0" y1="938.0" x2="1527.0" y2="938.0" stroke="#4e8a45" stroke-width="1" opacity="0.5"/><line x1="1420.0" y1="733.0" x2="1650.0" y2="733.0" stroke="#4e8a45" stroke-width="1.2" opacity="0.55"/><line x1="1455.0" y1="660.0" x2="1455.0" y2="771.0" stroke="#4e8a45" stroke-width="1" opacity="0.5"/><line x1="1465.0" y1="660.0" x2="1465.0" y2="771.0" stroke="#4e8a45" stroke-width="1" opacity="0.5"/><line x1="1380.0" y1="771.0" x2="1513.0" y2="771.0" stroke="#4e8a45" stroke-width="0.9" opacity="0.45"/><path d="M1437,734 L1447,717 L1457,734 Z" stroke="none" stroke-width="0" fill="#8a6a3a" opacity="0.75"/><circle cx="1447.0" cy="740.0" r="12.0" stroke="#7a6040" stroke-width="1" fill="none" opacity="0.5"/><rect x="1400.0" y="748.0" width="18.0" height="22.0" stroke="#4e8a45" stroke-width="1" fill="none" opacity="0.45"/><path d="M1420,780 A25,25 0 0 1 1445,805" stroke="#4e8a45" stroke-width="0.8" fill="none" opacity="0.45"/><rect x="1513.0" y="673.0" width="307.0" height="98.0" stroke="#6fae55" stroke-width="2" fill="none" opacity="0.6"/><line x1="1615.7" y1="673.0" x2="1615.7" y2="771.0" stroke="#6fae55" stroke-width="1.3" opacity="0.55"/><line x1="1513.0" y1="822.0" x2="1825.0" y2="822.0" stroke="#6fae55" stroke-width="1.5" opacity="0.55"/><line x1="1513.0" y1="986.0" x2="1540.0" y2="986.0" stroke="#6fae55" stroke-width="1" opacity="0.5"/><line x1="1513.0" y1="678.0" x2="1920.0" y2="678.0" stroke="#7a6040" stroke-width="3.5" opacity="0.55"/><line x1="1532.0" y1="686.0" x2="1532.0" y2="1034.0" stroke="#7a6040" stroke-width="3.5" opacity="0.55"/><line x1="1686.0" y1="678.0" x2="1686.0" y2="1034.0" stroke="#7a6040" stroke-width="3.5" opacity="0.55"/><line x1="1840.0" y1="678.0" x2="1840.0" y2="1034.0" stroke="#7a6040" stroke-width="3.5" opacity="0.55"/><line x1="1907.0" y1="678.0" x2="1907.0" y2="1034.0" stroke="#7a6040" stroke-width="3" opacity="0.55"/><line x1="1540.0" y1="986.0" x2="1920.0" y2="986.0" stroke="#7a6040" stroke-width="4" opacity="0.55"/><line x1="1843.0" y1="834.0" x2="1920.0" y2="834.0" stroke="#7a6040" stroke-width="3" opacity="0.55"/><line x1="1840.0" y1="744.0" x2="1920.0" y2="744.0" stroke="#4e8a45" stroke-width="1.2" opacity="0.5"/><line x1="1690.0" y1="905.0" x2="1840.0" y2="905.0" stroke="#4e8a45" stroke-width="1" opacity="0.45"/><circle cx="1686.0" cy="725.0" r="25.0" stroke="#6fae55" stroke-width="1.2" fill="none" opacity="0.55"/><circle cx="1686.0" cy="725.0" r="17.0" stroke="#6fae55" stroke-width="1.2" fill="none" opacity="0.55"/><circle cx="1686.0" cy="725.0" r="10.0" stroke="#6fae55" stroke-width="1.2" fill="none" opacity="0.55"/><path d="M1686,700 A25,25 0 0 1 1711,725" stroke="#6fae55" stroke-width="1.2" fill="none" opacity="0.5"/><rect x="1719.0" y="655.0" width="14.0" height="115.0" stroke="#6fae55" stroke-width="1.2" fill="none" opacity="0.45"/><rect x="1720.0" y="660.0" width="12.0" height="12.0" stroke="#6fae55" stroke-width="1" fill="none" opacity="0.4"/><rect x="1720.0" y="676.0" width="12.0" height="12.0" stroke="#6fae55" stroke-width="1" fill="none" opacity="0.4"/><rect x="1720.0" y="692.0" width="12.0" height="12.0" stroke="#6fae55" stroke-width="1" fill="none" opacity="0.4"/><rect x="1720.0" y="708.0" width="12.0" height="12.0" stroke="#6fae55" stroke-width="1" fill="none" opacity="0.4"/><rect x="1720.0" y="724.0" width="12.0" height="12.0" stroke="#6fae55" stroke-width="1" fill="none" opacity="0.4"/><rect x="1720.0" y="740.0" width="12.0" height="12.0" stroke="#6fae55" stroke-width="1" fill="none" opacity="0.4"/><rect x="1720.0" y="756.0" width="12.0" height="12.0" stroke="#6fae55" stroke-width="1" fill="none" opacity="0.4"/><rect x="1565.0" y="712.0" width="26.0" height="36.0" stroke="#7a6040" stroke-width="0.9" fill="none" opacity="0.5" stroke-dasharray="3 2"/><rect x="1556.0" y="718.0" width="7.0" height="7.0" stroke="#7a6040" stroke-width="0.8" fill="none" opacity="0.45" stroke-dasharray="2 1.5"/><rect x="1556.0" y="738.0" width="7.0" height="7.0" stroke="#7a6040" stroke-width="0.8" fill="none" opacity="0.45" stroke-dasharray="2 1.5"/><rect x="1594.0" y="718.0" width="7.0" height="7.0" stroke="#7a6040" stroke-width="0.8" fill="none" opacity="0.45" stroke-dasharray="2 1.5"/><rect x="1594.0" y="738.0" width="7.0" height="7.0" stroke="#7a6040" stroke-width="0.8" fill="none" opacity="0.45" stroke-dasharray="2 1.5"/><rect x="1574.0" y="700.0" width="8.0" height="8.0" stroke="#7a6040" stroke-width="0.8" fill="none" opacity="0.45" stroke-dasharray="2 1.5"/><rect x="1574.0" y="752.0" width="8.0" height="8.0" stroke="#7a6040" stroke-width="0.8" fill="none" opacity="0.45" stroke-dasharray="2 1.5"/><rect x="1565.0" y="814.0" width="26.0" height="36.0" stroke="#7a6040" stroke-width="0.9" fill="none" opacity="0.5" stroke-dasharray="3 2"/><rect x="1556.0" y="820.0" width="7.0" height="7.0" stroke="#7a6040" stroke-width="0.8" fill="none" opacity="0.45" stroke-dasharray="2 1.5"/><rect x="1556.0" y="840.0" width="7.0" height="7.0" stroke="#7a6040" stroke-width="0.8" fill="none" opacity="0.45" stroke-dasharray="2 1.5"/><rect x="1594.0" y="820.0" width="7.0" height="7.0" stroke="#7a6040" stroke-width="0.8" fill="none" opacity="0.45" stroke-dasharray="2 1.5"/><rect x="1594.0" y="840.0" width="7.0" height="7.0" stroke="#7a6040" stroke-width="0.8" fill="none" opacity="0.45" stroke-dasharray="2 1.5"/><rect x="1574.0" y="802.0" width="8.0" height="8.0" stroke="#7a6040" stroke-width="0.8" fill="none" opacity="0.45" stroke-dasharray="2 1.5"/><rect x="1574.0" y="854.0" width="8.0" height="8.0" stroke="#7a6040" stroke-width="0.8" fill="none" opacity="0.45" stroke-dasharray="2 1.5"/><rect x="1565.0" y="896.0" width="26.0" height="36.0" stroke="#7a6040" stroke-width="0.9" fill="none" opacity="0.5" stroke-dasharray="3 2"/><rect x="1556.0" y="902.0" width="7.0" height="7.0" stroke="#7a6040" stroke-width="0.8" fill="none" opacity="0.45" stroke-dasharray="2 1.5"/><rect x="1556.0" y="922.0" width="7.0" height="7.0" stroke="#7a6040" stroke-width="0.8" fill="none" opacity="0.45" stroke-dasharray="2 1.5"/><rect x="1594.0" y="902.0" width="7.0" height="7.0" stroke="#7a6040" stroke-width="0.8" fill="none" opacity="0.45" stroke-dasharray="2 1.5"/><rect x="1594.0" y="922.0" width="7.0" height="7.0" stroke="#7a6040" stroke-width="0.8" fill="none" opacity="0.45" stroke-dasharray="2 1.5"/><rect x="1574.0" y="884.0" width="8.0" height="8.0" stroke="#7a6040" stroke-width="0.8" fill="none" opacity="0.45" stroke-dasharray="2 1.5"/><rect x="1574.0" y="936.0" width="8.0" height="8.0" stroke="#7a6040" stroke-width="0.8" fill="none" opacity="0.45" stroke-dasharray="2 1.5"/><rect x="1630.0" y="896.0" width="26.0" height="36.0" stroke="#7a6040" stroke-width="0.9" fill="none" opacity="0.5" stroke-dasharray="3 2"/><rect x="1621.0" y="902.0" width="7.0" height="7.0" stroke="#7a6040" stroke-width="0.8" fill="none" opacity="0.45" stroke-dasharray="2 1.5"/><rect x="1621.0" y="922.0" width="7.0" height="7.0" stroke="#7a6040" stroke-width="0.8" fill="none" opacity="0.45" stroke-dasharray="2 1.5"/><rect x="1659.0" y="902.0" width="7.0" height="7.0" stroke="#7a6040" stroke-width="0.8" fill="none" opacity="0.45" stroke-dasharray="2 1.5"/><rect x="1659.0" y="922.0" width="7.0" height="7.0" stroke="#7a6040" stroke-width="0.8" fill="none" opacity="0.45" stroke-dasharray="2 1.5"/><rect x="1639.0" y="884.0" width="8.0" height="8.0" stroke="#7a6040" stroke-width="0.8" fill="none" opacity="0.45" stroke-dasharray="2 1.5"/><rect x="1639.0" y="936.0" width="8.0" height="8.0" stroke="#7a6040" stroke-width="0.8" fill="none" opacity="0.45" stroke-dasharray="2 1.5"/><path d="M1721,745 Q1721,738 1728,738 L1805,738 Q1812,738 1812,745 L1812,890 Q1812,918 1766,918 Q1721,918 1721,890 Z" stroke="#4e8a45" stroke-width="0.9" fill="none" opacity="0.4" stroke-dasharray="4 3"/><rect x="1716.0" y="790.0" width="11.0" height="11.0" stroke="#4e8a45" stroke-width="0.8" fill="none" opacity="0.38"/><rect x="1803.0" y="790.0" width="11.0" height="11.0" stroke="#4e8a45" stroke-width="0.8" fill="none" opacity="0.38"/><rect x="1716.0" y="814.0" width="11.0" height="11.0" stroke="#4e8a45" stroke-width="0.8" fill="none" opacity="0.38"/><rect x="1803.0" y="814.0" width="11.0" height="11.0" stroke="#4e8a45" stroke-width="0.8" fill="none" opacity="0.38"/><rect x="1716.0" y="838.0" width="11.0" height="11.0" stroke="#4e8a45" stroke-width="0.8" fill="none" opacity="0.38"/><rect x="1803.0" y="838.0" width="11.0" height="11.0" stroke="#4e8a45" stroke-width="0.8" fill="none" opacity="0.38"/><rect x="1716.0" y="862.0" width="11.0" height="11.0" stroke="#4e8a45" stroke-width="0.8" fill="none" opacity="0.38"/><rect x="1803.0" y="862.0" width="11.0" height="11.0" stroke="#4e8a45" stroke-width="0.8" fill="none" opacity="0.38"/><rect x="1716.0" y="886.0" width="11.0" height="11.0" stroke="#4e8a45" stroke-width="0.8" fill="none" opacity="0.38"/><rect x="1803.0" y="886.0" width="11.0" height="11.0" stroke="#4e8a45" stroke-width="0.8" fill="none" opacity="0.38"/><rect x="1741.0" y="725.0" width="11.0" height="10.0" stroke="#4e8a45" stroke-width="0.8" fill="none" opacity="0.38"/><rect x="1741.0" y="924.0" width="11.0" height="10.0" stroke="#4e8a45" stroke-width="0.8" fill="none" opacity="0.38"/><rect x="1761.0" y="725.0" width="11.0" height="10.0" stroke="#4e8a45" stroke-width="0.8" fill="none" opacity="0.38"/><rect x="1761.0" y="924.0" width="11.0" height="10.0" stroke="#4e8a45" stroke-width="0.8" fill="none" opacity="0.38"/><line x1="1582.0" y1="644.0" x2="1582.0" y2="1034.0" stroke="#4e8a45" stroke-width="0.7" opacity="0.3"/><line x1="1760.0" y1="644.0" x2="1760.0" y2="1034.0" stroke="#4e8a45" stroke-width="0.7" opacity="0.3"/><line x1="1775.0" y1="644.0" x2="1775.0" y2="1034.0" stroke="#4e8a45" stroke-width="0.7" opacity="0.3"/><line x1="1870.0" y1="644.0" x2="1870.0" y2="1034.0" stroke="#4e8a45" stroke-width="0.7" opacity="0.3"/><line x1="1888.0" y1="644.0" x2="1888.0" y2="1034.0" stroke="#4e8a45" stroke-width="0.7" opacity="0.3"/><line x1="1540.0" y1="700.0" x2="1920.0" y2="700.0" stroke="#4e8a45" stroke-width="0.6" opacity="0.3"/><line x1="1540.0" y1="800.0" x2="1920.0" y2="800.0" stroke="#4e8a45" stroke-width="0.6" opacity="0.3"/><line x1="1540.0" y1="870.0" x2="1920.0" y2="870.0" stroke="#4e8a45" stroke-width="0.6" opacity="0.3"/><line x1="1540.0" y1="960.0" x2="1920.0" y2="960.0" stroke="#4e8a45" stroke-width="0.6" opacity="0.3"/><line x1="1540.0" y1="1010.0" x2="1920.0" y2="1010.0" stroke="#4e8a45" stroke-width="0.6" opacity="0.3"/><path d="M1522,704 L1531,710 L1522,716 Z M1540,704 L1531,710 L1540,716 Z" stroke="#4e8a45" stroke-width="0.8" fill="none" opacity="0.45"/><path d="M1522,851 L1531,857 L1522,863 Z M1540,851 L1531,857 L1540,863 Z" stroke="#4e8a45" stroke-width="0.8" fill="none" opacity="0.45"/><path d="M1522,961 L1531,967 L1522,973 Z M1540,961 L1531,967 L1540,973 Z" stroke="#4e8a45" stroke-width="0.8" fill="none" opacity="0.45"/><path d="M1679,916 L1688,922 L1679,928 Z M1697,916 L1688,922 L1697,928 Z" stroke="#4e8a45" stroke-width="0.8" fill="none" opacity="0.45"/><path d="M1830,910 L1839,916 L1830,922 Z M1848,910 L1839,916 L1848,922 Z" stroke="#4e8a45" stroke-width="0.8" fill="none" opacity="0.45"/><path d="M1897,746 L1906,752 L1897,758 Z M1915,746 L1906,752 L1915,758 Z" stroke="#4e8a45" stroke-width="0.8" fill="none" opacity="0.45"/><path d="M1368,979 L1377,985 L1368,991 Z M1386,979 L1377,985 L1386,991 Z" stroke="#4e8a45" stroke-width="0.8" fill="none" opacity="0.45"/><path d="M1845,1010 A22,22 0 0 1 1890,1010" stroke="#4e8a45" stroke-width="0.9" fill="none" opacity="0.45"/><path d="M1750,700 A30,30 0 0 0 1720,670" stroke="#4e8a45" stroke-width="0.9" fill="none" opacity="0.45"/><line x1="1200.0" y1="1028.0" x2="1920.0" y2="1028.0" stroke="#4e8a45" stroke-width="0.6" opacity="0.35"/><line x1="1560.0" y1="1020.0" x2="1560.0" y2="1034.0" stroke="#4e8a45" stroke-width="0.6" opacity="0.35"/><line x1="1620.0" y1="1020.0" x2="1620.0" y2="1034.0" stroke="#4e8a45" stroke-width="0.6" opacity="0.35"/><line x1="1680.0" y1="1020.0" x2="1680.0" y2="1034.0" stroke="#4e8a45" stroke-width="0.6" opacity="0.35"/><line x1="1740.0" y1="1020.0" x2="1740.0" y2="1034.0" stroke="#4e8a45" stroke-width="0.6" opacity="0.35"/><line x1="1800.0" y1="1020.0" x2="1800.0" y2="1034.0" stroke="#4e8a45" stroke-width="0.6" opacity="0.35"/><line x1="1860.0" y1="1020.0" x2="1860.0" y2="1034.0" stroke="#4e8a45" stroke-width="0.6" opacity="0.35"/><polygon points="1616.9,1014.0 1610.0,1018.0 1603.1,1014.0 1603.1,1006.0 1610.0,1002.0 1616.9,1006.0" stroke="#4e8a45" stroke-width="0.8" fill="none" opacity="0.45"/><polygon points="1771.9,1009.0 1765.0,1013.0 1758.1,1009.0 1758.1,1001.0 1765.0,997.0 1771.9,1001.0" stroke="#4e8a45" stroke-width="0.8" fill="none" opacity="0.45"/><polygon points="1496.9,914.0 1490.0,918.0 1483.1,914.0 1483.1,906.0 1490.0,902.0 1496.9,906.0" stroke="#4e8a45" stroke-width="0.8" fill="none" opacity="0.45"/><rect x="1375.0" y="980.0" width="50.0" height="12.0" stroke="#7a6040" stroke-width="1.5" fill="none" opacity="0.5"/><line x1="1370.0" y1="945.0" x2="1370.0" y2="1034.0" stroke="#4e8a45" stroke-width="0.8" opacity="0.4"/><line x1="1403.0" y1="870.0" x2="1403.0" y2="1010.0" stroke="#4e8a45" stroke-width="0.6" opacity="0.35" stroke-dasharray="6 4"/></svg></div>

<!-- icon svgs -->
<svg class="abs" style="left:32px;top:14px" width="48" height="53" viewBox="0 0 48 53">
  <defs><linearGradient id="trg" x1="0" y1="0" x2="1" y2="1"><stop offset="0" stop-color="#c9cdcf"/><stop offset="0.5" stop-color="#b8bcbe"/><stop offset="0.5" stop-color="#a9aeb0"/><stop offset="1" stop-color="#9ca1a3"/></linearGradient></defs>
  <path d="M14 6 L14 1.5 Q14 0 15.5 0 L32.5 0 Q34 0 34 1.5 L34 6 L31 6 L31 3 L17 3 L17 6 Z" fill="#b9bdbf"/>
  <rect x="0" y="6" width="48" height="4" rx="1.5" fill="#b2b6b8"/>
  <rect x="3.8" y="10" width="40.4" height="42" rx="1" fill="url(#trg)"/>
  <rect x="6.2" y="12" width="3.7" height="36" rx="1.85" fill="#858b8e"/>
  <rect x="16" y="12" width="3.7" height="36" rx="1.85" fill="#858b8e"/>
  <rect x="28" y="12" width="3.7" height="36" rx="1.85" fill="#858b8e"/>
  <rect x="38" y="12" width="3.7" height="36" rx="1.85" fill="#858b8e"/>
</svg>
<svg class="abs" style="left:139px;top:14px" width="58" height="53" viewBox="0 0 58 53">
  <defs><linearGradient id="fdg" x1="0" y1="0" x2="0" y2="1"><stop offset="0" stop-color="#74c5f2"/><stop offset="1" stop-color="#3ea5e6"/></linearGradient></defs>
  <path d="M1 0 L25 0 L29 4 L57 4 L57 20 L1 20 Z" fill="#1a7fbd"/>
  <path d="M0 14 L19 14 L23 10.5 L58 10.5 L58 52 L0 52 Z" fill="url(#fdg)"/>
  <path d="M19.5 28.5 L29 20 L38.5 28.5 M21.5 27 L21.5 38.5 L36.5 38.5 L36.5 27 M35 21 L35 24.5" fill="none" stroke="#1f78ad" stroke-width="1.2"/>
  <rect x="27" y="33" width="4" height="5.5" fill="#1f78ad"/>
</svg>
<svg class="abs" style="left:476px;top:12px" width="56" height="56" viewBox="0 0 56 56">
  <defs><linearGradient id="stg" x1="0" y1="0" x2="0" y2="1"><stop offset="0" stop-color="#0e5fa3"/><stop offset="1" stop-color="#1c8fe0"/></linearGradient></defs>
  <circle cx="28" cy="28" r="27" fill="url(#stg)"/>
  <path d="M2.2 25 L18 31.5 Q20 29 24 28.5 L31 20 Q31 12 38 10.5 Q47 10 47.5 19 Q47 27 38.5 29 L29 36 Q28.5 45 20 45 Q13 44.5 12 38 L2.5 34 Q1.5 29 2.2 25 Z" fill="#fff"/>
  <circle cx="38.6" cy="19.3" r="5.4" fill="none" stroke="#1466a8" stroke-width="1.3"/>
  <path d="M16 35.5 Q18 40 22.5 39.5 Q27 38.5 26.5 33.5 Q25.5 29.5 21 29.8" fill="none" stroke="#1466a8" stroke-width="1.1"/>
</svg>
<svg class="abs" style="left:153px;top:142px" width="31" height="54" viewBox="0 0 31 54">
  <rect x="0" y="0" width="30.5" height="53" rx="1" fill="#dcdedf"/>
  <rect x="0.5" y="0.5" width="29.5" height="52" rx="1" fill="none" stroke="#b8bbbd"/>
  <rect x="2.5" y="5.5" width="25.5" height="42" fill="#373a3d"/>
  <rect x="11.5" y="2" width="7" height="1.6" rx=".8" fill="#222"/>
  <rect x="11.5" y="49.5" width="7" height="1.6" rx=".8" fill="#222"/>
  <circle cx="5.3" cy="41.6" r="1.9" fill="#3a8fd9"/><circle cx="10.3" cy="41.6" r="1.9" fill="#e8336f"/><circle cx="15.3" cy="41.6" r="1.9" fill="#c9c9c9"/><circle cx="20.3" cy="41.6" r="1.9" fill="#e0513a"/><circle cx="25.3" cy="41.6" r="1.9" fill="#2bb35b"/>
</svg>
<svg class="abs" style="left:367px;top:139px" width="53" height="60" viewBox="0 0 53 60">
  <path d="M1 2 Q1 -0.5 4 0.5 L52 27 Q53.5 29 52 31 L4 58.5 Q1 60 1 57 Z" fill="#1565b0"/>
  <path d="M9 8 L23 8 L23 56 L9 56 Z" fill="#0a8be0"/>
  <path d="M17 8 L45 8 L45 26 L52 30 L17 50 Z" fill="#3fd0f7"/>
  <path d="M17 8 L23 8 L23 47 L17 50 Z" fill="#0d94e6"/>
  <path d="M35 8 L43 8 L43 20 L39 17 L35 20 Z" fill="#fff"/>
</svg>
<svg class="abs" style="left:250px;top:268px" width="60" height="60" viewBox="0 0 60 60">
  <circle cx="30" cy="30" r="30" fill="#1ea362"/>
  <path d="M30 30 L18.3 36.75 L4.9 13.5 A30 30 0 0 1 56.8 16.5 L30 16.5 Z" fill="#db4437"/>
  <path d="M30 30 L30 16.5 L56.8 16.5 A30 30 0 0 1 28.3 60 L41.7 36.75 Z" fill="#fdc938"/>
  <circle cx="30" cy="30" r="13.5" fill="#fff"/>
  <circle cx="30" cy="30" r="11" fill="#4a88f0"/>
</svg>
<svg class="abs" style="left:363px;top:266px" width="60" height="62" viewBox="0 0 60 62">
  <defs>
    <radialGradient id="ffo" cx="0.7" cy="0.1" r="1"><stop offset="0" stop-color="#fff44f"/><stop offset="0.3" stop-color="#ffb92e"/><stop offset="0.55" stop-color="#ff6d2c"/><stop offset="0.82" stop-color="#ff3b4e"/><stop offset="1" stop-color="#e3148d"/></radialGradient>
    <radialGradient id="ffp" cx="0.5" cy="0.55" r="0.6"><stop offset="0" stop-color="#7f5cf7"/><stop offset="0.7" stop-color="#9a3ee8"/><stop offset="1" stop-color="#b43ee0"/></radialGradient>
    <linearGradient id="ffy" x1="0" y1="0" x2="0.3" y2="1"><stop offset="0" stop-color="#fff35a"/><stop offset="0.7" stop-color="#ffc43a"/><stop offset="1" stop-color="#ff9a2a"/></linearGradient>
  </defs>
  <path d="M37.4 2 Q44 9 49 14 Q58 26 57 38 Q55 58 29 59.7 Q4 59 0.7 36 Q0.5 22 11.4 10.9 Q12 16 14 18 Q17 14 19.6 12.7 Q20.5 17 22 20 Q26 18 30 18.5 Q30 9 37.4 2 Z" fill="url(#ffo)"/>
  <path d="M30 18.5 Q30 9 37.4 2 Q46 10 51 20 Q57 32 51 44 Q46 50 40 50 Q45 42 42 32 Q39 23 33 20 Z" fill="url(#ffy)" opacity=".9"/>
  <circle cx="28.5" cy="30.9" r="11.9" fill="url(#ffp)"/>
  <path d="M35 23.5 Q39 22 41.5 24.5 Q40 31 37 27 Q36 25 35 23.5 Z" fill="#ffb13a"/>
  <path d="M8.5 26.4 Q16 22 24 23 Q28 24 28.9 26.8 Q24 27 20.5 30 Q14 30.5 8.5 26.4 Z" fill="#ffb52e"/>
  <path d="M13 14 Q20 20 28.9 26.8 Q22 24 14 22 Z" fill="#ff9a2a" opacity=".7"/>
</svg>
<!-- desktop icons -->
<div class="lbl" style="left:6px;top:78px;width:100px">Papelera</div>
<div class="lbl" style="left:118px;top:78px;width:100px">Inicio</div>
<div class="lbl" style="left:453px;top:78px;width:100px">Steam</div>
<div class="lbl" style="left:118px;top:207px;width:100px">Mi A2 Lite</div>
<div class="lbl" style="left:342px;top:207px;width:100px">Google Play<br>Books</div>
<div class="lbl" style="left:220px;top:336px;width:120px">Google Chrome</div>
<div class="lbl" style="left:342px;top:336px;width:100px">Firefox</div>

<!-- AutoFirma -->
<div id="af">
  <div class="abs" style="left:2px;top:14px;width:1px;height:555px;background:#3a3d40"></div>
  <div class="abs" style="left:3px;top:14px;width:1px;height:555px;background:#b8cfe5"></div>
  <div class="abs" style="left:14px;top:2px;width:760px;height:1px;background:#3a3d40"></div>
  <div class="abs" style="left:14px;top:3px;width:760px;height:1px;background:#b8cfe5"></div>
  <div class="abs" style="left:787px;top:14px;width:1px;height:555px;background:#3a3d40"></div><div class="abs" style="left:788px;top:14px;width:1px;height:555px;background:#b8cfe5"></div><div class="abs" style="left:784px;top:28px;width:1px;height:548px;background:#ffffff"></div><div class="abs" style="left:5px;top:576px;width:780px;height:1px;background:#ffffff"></div>
  <div class="abs" style="left:14px;top:578px;width:760px;height:1px;background:#3a3d40"></div>
  <div class="abs" style="left:14px;top:579px;width:760px;height:1px;background:#b8cfe5"></div>
  <div class="tb">
    <svg class="abs" style="left:5px;top:2px" width="18" height="18" viewBox="0 0 18 18"><circle cx="8.5" cy="8.5" r="6.6" fill="none" stroke="#a00000" stroke-width="1.9"/><path d="M4.6 7.4 Q4.8 5.2 8.5 5.2 Q12.2 5.2 12.4 7.4" fill="none" stroke="#a00000" stroke-width="1.8"/><rect x="4.6" y="9.2" width="7.8" height="2.4" rx="1" fill="#a00000"/><path d="M10 15.6 L14.5 15.6" stroke="#e8a0a0" stroke-width="1"/></svg>
    <div class="abs bold" style="left:26px;top:3px;font-size:11.7px;line-height:16px;color:#333">AutoFirma v1.6.5</div>
    <svg class="abs" style="left:125px;top:3px" width="660" height="16"><defs><pattern id="dp" width="4" height="4" patternUnits="userSpaceOnUse"><rect x="0" y="0" width="1" height="1" fill="#ffffff"/><rect x="1" y="1" width="1" height="1" fill="#7b8692"/><rect x="2" y="2" width="1" height="1" fill="#ffffff"/><rect x="3" y="3" width="1" height="1" fill="#7b8692"/></pattern></defs><rect width="660" height="16" fill="url(#dp)"/></svg>
  </div>
  <div class="abs" style="left:5px;top:26px;width:780px;height:1px;background:#b8cfe5"></div>
  <div class="abs" style="left:5px;top:27px;width:780px;height:1px;background:#7e8e9e"></div>
  <div class="cont">
    <div class="abs" style="left:16px;top:15px;font-size:26px;line-height:32px;color:#333;white-space:nowrap">Bienvenido a AutoFirma</div>
    <div class="abs bold para" style="left:16px;top:52px">En esta pantalla puede firmar electrónicamente ficheros que se encuentren en su ordenador o en una unidad de red.<br>Cuando firma electrónicamente un fichero pueden incorporarse a este cierto tipo de información personal procedente de su certificado, como su<br>número de DNI, su nombre y apellidos o incluso información sobre su situación laboral. Si va a distribuir los ficheros firmados, tenga en cuenta las<br>políticas de seguridad y protección de datos de los receptores de los ficheros.<br>A partir de este punto, no inserte o extraiga ninguna tarjeta inteligente o dispositivo criptográfico.<br>Importante: No inserte ni retire ninguna tarjeta del lector de tarjetas inteligentes mientras se esté firmando.</div>
    <div class="abs btn" style="left:21px;top:152px;width:184px;height:25px"><u>S</u>eleccionar ficheros a firmar</div>
    <div class="abs" style="left:16px;top:212px;width:747px;height:283px;border:1px solid #111"></div>
    <div class="abs" style="left:46px;top:330px;font-size:25px;line-height:30px;color:#3c3c3c;letter-spacing:-0.05px;white-space:nowrap;font-weight:300">Pulse el botón o arrastre ficheros aquí para firmarlos</div>
    <div class="abs btnd" style="left:339px;top:506px;width:100px;height:21px"><u>F</u>irmar</div>
  </div>
</div>

<!-- Error dialog -->
<div id="dlg">
  <div class="abs" style="left:5px;top:5px;width:300px;height:21px;background:#eeeeee">
    <div class="abs bold" style="left:5px;top:2px;font-size:11px;line-height:16px;color:#333;white-space:nowrap">Error en la iniciaización del DNIe</div>
    <svg class="abs" style="left:181px;top:3px" width="120" height="16"><rect width="120" height="16" fill="url(#dp)"/></svg>
  </div>
  <div class="abs" style="left:5px;top:26px;width:300px;height:1px;background:#b8cfe5"></div>
  <div class="abs" style="left:5px;top:27px;width:300px;height:90px;background:#eeeeee">
    <svg class="abs" style="left:10px;top:9px" width="32" height="32"><defs><filter id="sh" x="-20%" y="-20%" width="150%" height="150%"><feDropShadow dx="1" dy="1.5" stdDeviation="1" flood-opacity=".35"/></filter></defs><path d="M9 1 L19 1 L26 8 L26 19 L19 26 L9 26 L1 19 L1 8 Z" transform="translate(0.5,0.5)" fill="#f0a3a3" stroke="#c56a6a" stroke-width="1" filter="url(#sh)"/><path d="M8.5 9 L18.5 19 M18.5 9 L8.5 19" stroke="#8a0a0a" stroke-width="3.2"/></svg>
    <div class="abs bold" style="left:57px;top:9px;font-size:11px;line-height:18px;color:#333;white-space:nowrap">No ha sido posible inicializar el DNIe.<br>Se continuará con el almacén de claves del sistema.</div>
    <div class="abs btn" style="left:149px;top:52px;width:54px;height:25px;border:2px solid #5d6d7d;line-height:21px">Cerrar</div>
  </div>
</div>

<!-- Konsole -->
<div id="kon">
  <div class="title">
    <div class="abs" style="left:6px;top:6px;width:16px;height:16px;background:linear-gradient(135deg,#4a5155,#2b2f31);border-top:1px solid #5d6468;border-radius:1px"></div>
    <svg class="abs" style="left:6px;top:6px" width="16" height="16"><path d="M6 4.5 L10 8 L6 11.5" fill="none" stroke="#c8cccf" stroke-width="1"/></svg>
    <svg class="abs" style="left:32px;top:6px" width="14" height="14"><path d="M4.6 7.2 L9.4 2.2 L12.4 5.2 L7.4 10 Z" fill="#fcfcfc"/><path d="M2.4 6.6 L7.6 11.8" stroke="#fcfcfc" stroke-width="1.5"/><path d="M1.2 12.8 L6 8" stroke="#fcfcfc" stroke-width="1.3"/></svg>
    <div class="abs" style="left:0;top:0;width:907px;height:29px;line-height:29px;text-align:center;color:#f0f0f0;font-size:13.2px;padding-left:0px">~ : bash — Konsole</div>
    <svg class="abs" style="left:838px;top:104px;top:10px" width="14" height="9"><path d="M1.5 1.5 L7 7 L12.5 1.5" fill="none" stroke="#fcfcfc" stroke-width="1.3"/></svg>
    <svg class="abs" style="left:862px;top:10px" width="14" height="9"><path d="M1.5 7.5 L7 2 L12.5 7.5" fill="none" stroke="#fcfcfc" stroke-width="1.3"/></svg>
    <svg class="abs" style="left:883px;top:5px" width="20" height="20"><circle cx="10" cy="9.5" r="9.2" fill="#da4453"/><path d="M6 5.5 L14 13.5 M14 5.5 L6 13.5" stroke="#31363b" stroke-width="0.9" opacity=".9"/></svg>
  </div>
  <div class="menu">
    <span class="mi" style="left:10px">Archivo</span>
    <span class="mi" style="left:77px">Editar</span>
    <span class="mi" style="left:134px">Ver</span>
    <span class="mi" style="left:175px">Marcadores</span>
    <span class="mi" style="left:268px">Preferencias</span>
    <span class="mi" style="left:364px">Ayuda</span>
  </div>
  <div class="abs" style="left:0;top:240px;width:3px;height:300px;background:#2a79b6"></div>
  <div class="abs" style="left:894px;top:510px;width:6px;height:33px;background:#7f8183;border-radius:3px"></div>
  <div class="term">jul. 08, 2021 2:16:50 P. M. es.gob.afirma.standalone.SimpleAfirma main
INFORMACIÓN: Iniciando entorno grafico
jul. 08, 2021 2:16:54 P. M. es.gob.afirma.keystores.AOKeyStoreManager init
INFORMACIÓN: Inicializamos el almacen de tipo: DNIe y tarjetas FNMT-TIF
jul. 08, 2021 2:16:54 P. M. es.gob.afirma.keystores.AOKeyStoreManagerHelperFullJava init
INFORMACIÓN: Cargando KeyStore 100% Java para DNIe y tarjetas FNMT-TIF
jul. 08, 2021 2:16:54 P. M. es.gob.jmulticard.card.dnie.DnieFactory getDnie
INFORMACIÓN: Detectado DNIe 3.0
jul. 08, 2021 2:16:54 P. M. es.gob.jmulticard.card.iso7816four.Iso7816FourCard readBinaryComplete
ADVERTENCIA: Se ha intentado una lectura fuera de los limites del fichero, se devolvera lo leido hasta ahora: es.gob.jmultica
rd.card.iso7816four.OffsetOutsideEfException: Parametro(s) incorrecto(s) P1-P2 (6B00). APDU de origen: 00-B0-07-70-B5
jul. 08, 2021 2:16:55 P. M. es.gob.afirma.keystores.AOKeyStoreManager getCertificate
GRAVE: Error intentando recuperar el certificado con el alias 'CertAutenticacion', se devolvera null: java.security.ProviderE
xception: es.gob.jmulticard.card.CryptoCardException: Error en el establecimiento del canal seguro de PIN: es.gob.jmulticard.
apdu.connection.ApduConnectionException: Error al verificar la cadena de certificados del controlador: es.gob.jmulticard.apdu
.connection.cwa14890.SecureChannelException: Error en la verificacion del certificado de la CA intermedia de Terminal: es.gob
.jmulticard.apdu.connection.cwa14890.SecureChannelException: Error en la verificacion del certificado. Se obtuvo el error: 6A
-80: es.gob.jmulticard.apdu.connection.cwa14890.SecureChannelException: Error en la verificacion del certificado. Se obtuvo e
l error: 6A-80: es.gob.jmulticard.apdu.connection.cwa14890.SecureChannelException: Error en la verificacion del certificado d
e la CA intermedia de Terminal: es.gob.jmulticard.apdu.connection.cwa14890.SecureChannelException: Error en la verificacion d
el certificado. Se obtuvo el error: 6A-80: es.gob.jmulticard.apdu.connection.cwa14890.SecureChannelException: Error en la ver
ificacion del certificado. Se obtuvo el error: 6A-80: Error al verificar la cadena de certificados del controlador: es.gob.jm
ulticard.apdu.connection.cwa14890.SecureChannelException: Error en la verificacion del certificado de la CA intermedia de Ter
minal: es.gob.jmulticard.apdu.connection.cwa14890.SecureChannelException: Error en la verificacion del certificado. Se obtuvo
 el error: 6A-80: es.gob.jmulticard.apdu.connection.cwa14890.SecureChannelException: Error en la verificacion del certificado
. Se obtuvo el error: 6A-80: es.gob.jmulticard.apdu.connection.cwa14890.SecureChannelException: Error en la verificacion del
certificado de la CA intermedia de Terminal: es.gob.jmulticard.apdu.connection.cwa14890.SecureChannelException: Error en la v
erificacion del certificado. Se obtuvo el error: 6A-80: es.gob.jmulticard.apdu.connection.cwa14890.SecureChannelException: Er
ror en la verificacion del certificado. Se obtuvo el error: 6A-80
jul. 08, 2021 2:16:55 P. M. es.gob.afirma.standalone.SimpleKeyStoreManager getKeyStore
GRAVE: No se ha podido inicializar el controlador 100% Java del DNIe: java.lang.NullPointerException
<span class="cur"> </span></div>
</div>

<div id="tbar">
  <!-- openSUSE -->
  <svg class="abs" style="left:6px;top:6px" width="34" height="34" viewBox="0 0 34 34">
    <circle cx="17" cy="17" r="15" fill="none" stroke="#232627" stroke-width="2.4"/>
    <path d="M6.9 7.6 L10.2 6.5 Q19.5 7.2 23.9 10.2 Q27 13 28 18.4 L27.6 21.7 Q24 24.6 20.2 24.8 Q12 25 6.9 25.8 A13.9 13.9 0 0 1 6.9 7.6 Z" fill="#232627"/>
    <path d="M11.5 15.8 Q17 21.5 27.8 20.5" fill="none" stroke="#eff0f1" stroke-width="1.3"/>
    <circle cx="21.2" cy="14.4" r="3.6" fill="none" stroke="#eff0f1" stroke-width="1.1"/>
    <circle cx="21.2" cy="14.4" r="1.1" fill="#eff0f1"/>
  </svg>
  <!-- pager -->
  <div class="abs" style="left:46px;top:4px;width:32px;height:18px;background:#7fc4ea"></div>
  <div class="abs" style="left:46px;top:22px;width:32px;height:19px;background:#d3d6d8"></div>
  <div class="abs" style="left:55px;top:9px;width:14px;height:9px;background:rgba(40,110,160,.35);border:1px solid rgba(40,100,150,.5)"></div>
  <div class="abs" style="left:62px;top:7px;width:16px;height:9px;background:rgba(40,110,160,.45);border:1px solid rgba(30,90,140,.7)"></div>
  <!-- settings -->
  <svg class="abs" style="left:96px;top:9px" width="28" height="28" viewBox="0 0 28 28">
    <defs><linearGradient id="stgr" x1="0" y1="0" x2="1" y2="1"><stop offset="0" stop-color="#3b3f42"/><stop offset=".5" stop-color="#2a2d2f"/><stop offset=".5" stop-color="#232527"/><stop offset="1" stop-color="#1c1e20"/></linearGradient></defs>
    <rect width="28" height="28" fill="url(#stgr)"/>
    <rect x="3" y="9" width="22" height="1.6" fill="#3a3d40"/><rect x="3" y="9" width="17" height="1.6" fill="#3daee9"/><circle cx="20.5" cy="9.8" r="2" fill="#fcfcfc"/>
    <rect x="3" y="18" width="22" height="1.6" fill="#3a3d40"/><rect x="3" y="18" width="7" height="1.6" fill="#3daee9"/><circle cx="10" cy="18.8" r="2" fill="#fcfcfc"/>
  </svg>
  <!-- discover -->
  <svg class="abs" style="left:151px;top:8px" width="26" height="30" viewBox="0 0 26 30">
    <defs><linearGradient id="dsg" x1="0" y1="0" x2="0" y2="1"><stop offset="0" stop-color="#22b0ff"/><stop offset="1" stop-color="#1d86e8"/></linearGradient></defs>
    <path d="M9 6 Q9 1.5 13 1.5 Q17 1.5 17 6" fill="none" stroke="#1d99f3" stroke-width="1.2"/>
    <path d="M2.5 4.5 L23.5 4.5 L24.5 7 L1.5 7 Z" fill="#1a6fb0"/>
    <rect x="1" y="6" width="24" height="23" fill="url(#dsg)"/>
    <path d="M14.5 11.5 L17.5 14.5 L14.5 17.5" fill="none" stroke="#fcfcfc" stroke-width="1.4"/>
    <circle cx="11.5" cy="12" r=".7" fill="#cfe9fb"/><circle cx="9" cy="17.5" r=".7" fill="#cfe9fb"/><circle cx="12" cy="21.5" r=".9" fill="#cfe9fb"/>
  </svg>
  <!-- folder -->
  <svg class="abs" style="left:202px;top:9px" width="32" height="28" viewBox="0 0 32 28">
    <path d="M1 0 L13 0 L15 2 L31 2 L31 12 L1 12 Z" fill="#1b6cb1"/>
    <rect x="2" y="5" width="28" height="4" fill="#fcfcfc"/>
    <path d="M1 11 L13 11 L15 9 L31 9 L31 28 L1 28 Z" fill="#2e8ee3"/>
    <path d="M1 11 L13 11 L15 9 L31 9 L31 28 L18 28 Z" fill="#1f7fd6" opacity=".6"/>
  </svg>
  <!-- chrome -->
  <svg class="abs" style="left:257px;top:8px" width="30" height="30" viewBox="0 0 60 60">
    <circle cx="30" cy="30" r="30" fill="#1ea362"/>
    <path d="M30 30 L18.3 36.75 L4.9 13.5 A30 30 0 0 1 56.8 16.5 L30 16.5 Z" fill="#db4437"/>
    <path d="M30 30 L30 16.5 L56.8 16.5 A30 30 0 0 1 28.3 60 L41.7 36.75 Z" fill="#fdc938"/>
    <circle cx="30" cy="30" r="13.5" fill="#fff"/>
    <circle cx="30" cy="30" r="11" fill="#4a88f0"/>
  </svg>
  <!-- konsole task -->
  <div class="abs" style="left:300px;top:0;width:52px;height:46px;background:#b4d9ef"></div>
  <div class="abs" style="left:300px;top:0;width:52px;height:3px;background:#6bbff0"></div>
  <svg class="abs" style="left:312px;top:9px" width="28" height="28" viewBox="0 0 28 28">
    <defs><linearGradient id="kg" x1="0" y1="0" x2="1" y2="1"><stop offset="0" stop-color="#4b5255"/><stop offset=".5" stop-color="#3a3f42"/><stop offset=".5" stop-color="#31363a"/><stop offset="1" stop-color="#2a2e31"/></linearGradient></defs>
    <rect width="28" height="28" fill="url(#kg)"/>
    <path d="M11 7 L17 14 L11 21" fill="none" stroke="#a5abae" stroke-width="1.1"/>
  </svg>
  <!-- thunderbird -->
  <svg class="abs" style="left:363px;top:7px" width="34" height="34" viewBox="0 0 34 34">
    <defs><linearGradient id="tbg" x1="0" y1="0" x2="1" y2="1"><stop offset="0" stop-color="#1c8ee6"/><stop offset=".5" stop-color="#1f63c9"/><stop offset="1" stop-color="#3a48a8"/></linearGradient></defs>
    <circle cx="17" cy="16.5" r="15.6" fill="url(#tbg)"/>
    <path d="M3.5 14 Q4.5 11 9 11.5 L23.5 12.5 L23.5 22 Q21.5 26.5 17.5 29 L12.5 27.5 L6 24.5 Q2.8 20 3.5 14 Z" fill="#fbfbf7"/>
    <path d="M6.5 12.5 Q9 5 16 4.5 Q23 4.5 26 12 L23.5 14 Q20 9.5 15 10 Q10.5 10.5 8.5 13.5 Z" fill="#2a8ae0"/>
    <path d="M8 15.5 L13 21.5 L23.5 18.5" fill="none" stroke="#cbc6b6" stroke-width=".8"/>
    <path d="M5 23 L12.5 26.5 L9 29.5 Q6 27 5 23 Z" fill="#2c1c66"/>
    <circle cx="10.2" cy="10.5" r="1" fill="#e8a020"/>
  </svg>
  <!-- autofirma task -->
  <div class="abs" style="left:408px;top:0;width:52px;height:46px;background:#ccd0d3"></div>
  <div class="abs" style="left:408px;top:0;width:52px;height:3px;background:#a6a9ac"></div>
  <svg class="abs" style="left:417px;top:7px" width="34" height="34" viewBox="0 0 34 34">
    <circle cx="17" cy="16.5" r="14" fill="#fdf6f6" stroke="#9e0000" stroke-width="3.4"/>
    <path d="M9.5 13.6 Q10 9.4 17 9.4 Q24 9.4 24.5 13.6 L24.5 22.5" fill="none" stroke="#9e0000" stroke-width="3.2"/>
    <rect x="8.6" y="16.6" width="17" height="5.2" rx="2.6" fill="#9e0000"/>
    <path d="M22 30.3 L33 30.3" stroke="#e58a8a" stroke-width="1.1"/>
  </svg>
  <!-- tray -->
  <div class="abs bold" style="left:1663px;top:14px;font-size:11.5px;line-height:16px;color:#3f5ba8;letter-spacing:0.6px">EN</div>
  <svg class="abs" style="left:1693px;top:14px" width="16" height="18" viewBox="0 0 16 18">
    <rect x="1.5" y="3.5" width="13" height="13" fill="none" stroke="#232627" stroke-width="1.2"/>
    <rect x="3.5" y="1" width="9" height="4" fill="#232627"/>
    <path d="M4 8.5 L12 8.5 M4 11 L10 11 M4 13.5 L7 13.5" stroke="#232627" stroke-width="1"/>
  </svg>
  <svg class="abs" style="left:1722px;top:14px" width="18" height="18" viewBox="0 0 18 18">
    <path d="M5.5 1.5 L16.5 1.5 L16.5 12.5 L5.5 12.5 Z" fill="none" stroke="#232627" stroke-width="1.1"/>
    <path d="M9 13 L13 13 L13.5 15.5 L8.5 15.5 Z" fill="#232627"/>
    <rect x="1" y="1" width="3.5" height="5" fill="none" stroke="#232627" stroke-width=".9"/>
    <path d="M2.7 6 L2.7 12 Q2.7 14.5 6 14.5 L8 14.5" fill="none" stroke="#232627" stroke-width=".9"/>
  </svg>
  <svg class="abs" style="left:1752px;top:14px" width="18" height="18" viewBox="0 0 18 18">
    <path d="M1 6 L4 6 L8.5 2 L8.5 16 L4 12 L1 12 Z" fill="#232627"/>
    <path d="M11 5 Q13.5 9 11 13" fill="none" stroke="#9a9c9e" stroke-width="1"/>
    <path d="M13 3 Q17 9 13 15" fill="none" stroke="#b5b7b9" stroke-width="1"/>
  </svg>
  <svg class="abs" style="left:1782px;top:19px" width="14" height="8" viewBox="0 0 14 8"><path d="M1 7 L7 1 L13 7 Z" fill="#232627"/></svg>
  <div class="abs" style="left:1808px;top:2px;font-size:21px;line-height:24px;color:#232627;transform:scaleY(1.08);transform-origin:0 12px">14:16</div>
  <div class="abs" style="left:1808px;top:26px;font-size:17.5px;line-height:20px;color:#232627">8/7/21</div>
  <div class="abs" style="left:1881px;top:11px;width:24px;height:24px;border:1.3px solid #232627"></div>
  <div class="abs" style="left:1884px;top:30px;width:18px;height:1.3px;background:#232627"></div>
</div>
</body></html>
